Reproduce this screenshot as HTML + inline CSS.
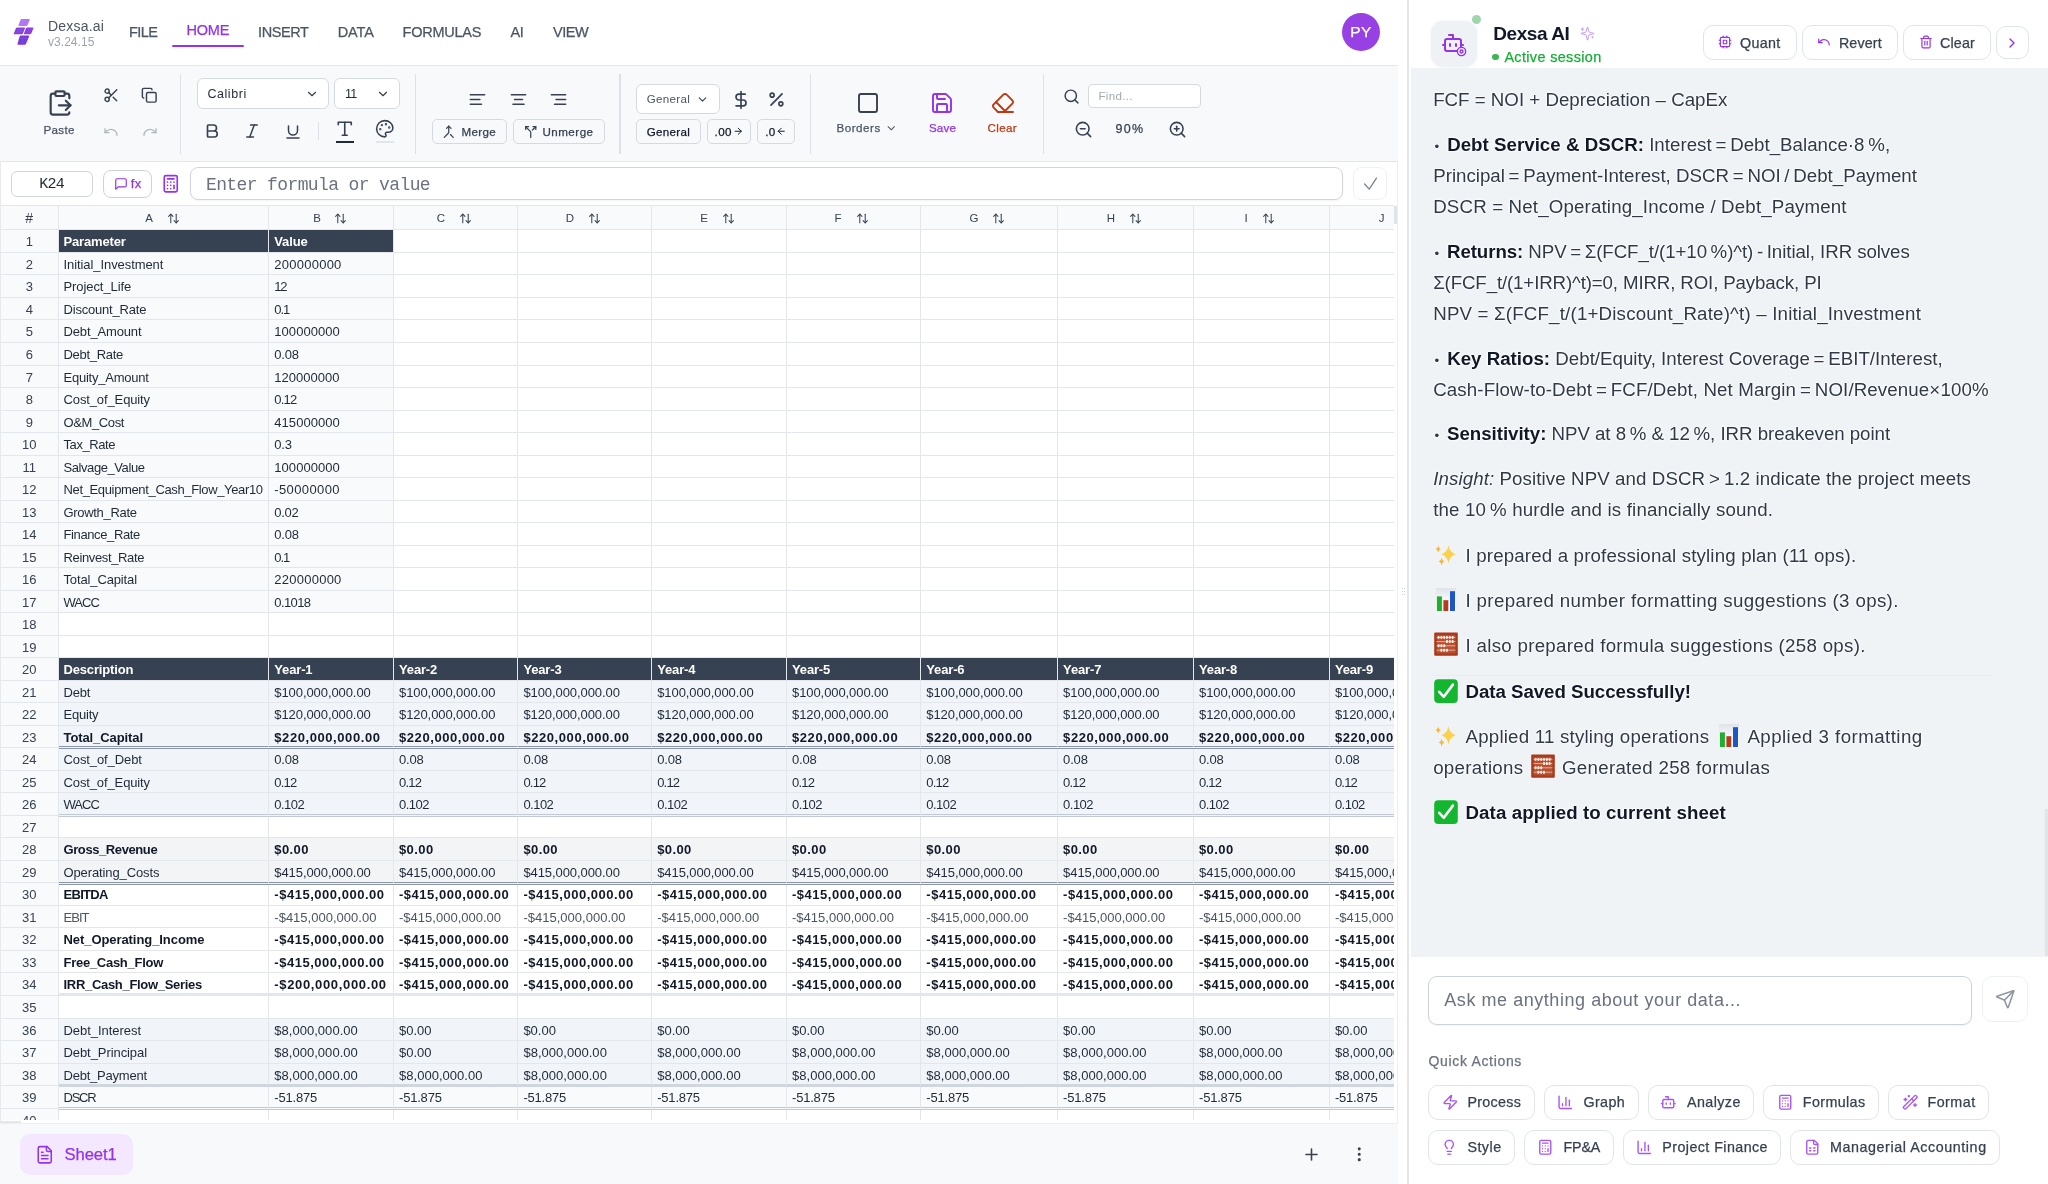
<!DOCTYPE html>
<html><head><meta charset="utf-8"><title>Dexsa.ai</title>
<style>
html,body{margin:0;padding:0;}
body{width:2048px;height:1184px;overflow:hidden;background:#fff;position:relative;font-family:"Liberation Sans",sans-serif;}
.t{position:absolute;white-space:nowrap;display:block;}
.i{position:absolute;display:block;overflow:visible;}
.b{position:absolute;box-sizing:border-box;}
#wrap{position:absolute;left:0;top:0;width:2048px;height:1184px;will-change:transform;}
#left{position:absolute;left:0;top:0;width:1398px;height:1184px;overflow:hidden;}
#right{position:absolute;left:1410px;top:0;width:638px;height:1184px;overflow:hidden;background:#fff;}
#grid{position:absolute;left:0;top:205px;width:1394px;height:914.8px;overflow:hidden;background:#fff;}
.r{position:absolute;left:0;width:1394px;height:22.517px;}
.c{position:absolute;top:0;height:22.517px;box-sizing:border-box;border-right:1px solid #e3e6eb;border-bottom:1px solid #e3e6eb;overflow:hidden;white-space:nowrap;font-size:13px;line-height:24px;padding-left:5px;color:#1f2937;}
.n{left:0;width:58.5px;text-align:center;padding:0;background:#f9fafb;color:#374151;border-left:1px solid #e3e6eb;}
.hd{background:#364152;color:#fff;font-weight:700;}
.bd{font-weight:700;color:#111827;}
</style></head><body><div id="wrap">

<div id="left">
<div class="b" style="left:0.0px;top:65.0px;width:1398.0px;height:1.0px;background:#e5e7eb;"></div>
<svg class="i" style="left:0px;top:0px" width="50" height="60" viewBox="0 0 50 60"><path d="M21.800 19h7.300q1 0 .6.900l-2.100 5.200q-.3.800-1.200.800h-7.300q-1 0-.6-.900l2.100-5.200q.3-.800 1.200-.800z" fill="#b377f3"/><path d="M17.100 27.400h7.300q1 0 .6.900l-2.100 5.200q-.3.800-1.200.800h-7.300q-1 0-.6-.900l2.100-5.200q.3-.800 1.200-.800z" fill="#8b3fe0"/><path d="M27.200 27.400h5.600q1 0 .6.900l-2.100 5.200q-.3.800-1.200.800h-5.600q-1 0-.6-.900l2.100-5.200q.3-.800 1.200-.800z" fill="#8b3fe0"/><path d="M20.900 35.500h7.600q1 0 .6.900l-3.200 7.500q-.3.800-1.200.800h-6.600q-1 0-.6-.900l2.200-7.500q.3-.800 1.200-.800z" fill="#8434dd"/><g fill="#5b8fe0"><circle cx="18.500" cy="30" r=".45"/><circle cx="20.500" cy="30" r=".45"/><circle cx="22.300" cy="30" r=".45"/><circle cx="19.400" cy="31.800" r=".45"/><circle cx="21.200" cy="31.800" r=".45"/><circle cx="28.500" cy="29.600" r=".45"/><circle cx="30.400" cy="29.600" r=".45"/><circle cx="27.700" cy="31.600" r=".45"/><circle cx="29.600" cy="31.600" r=".45"/><circle cx="22.500" cy="38.500" r=".5"/><circle cx="25.300" cy="38.500" r=".5"/><circle cx="22.300" cy="40.500" r=".55" fill="#2f6fd8"/><circle cx="25.200" cy="40.500" r=".55" fill="#2f6fd8"/><circle cx="22.500" cy="42.500" r=".45"/></g></svg>
<span class="t" style="left:48.0px;top:15.6px;line-height:20px;font-size:14px;color:#4b5563;letter-spacing:0.216px;">Dexsa.ai</span>
<span class="t" style="left:48.0px;top:33.9px;line-height:17px;font-size:12px;color:#9ca3af;letter-spacing:0.045px;">v3.24.15</span>
<span class="t" style="left:129.0px;top:21.6px;line-height:20px;font-size:14.5px;color:#4b5563;letter-spacing:-0.531px;-webkit-text-stroke:.25px;">FILE</span>
<span class="t" style="left:186.6px;top:20.4px;line-height:20px;font-size:14.5px;color:#9333ea;letter-spacing:-0.250px;-webkit-text-stroke:.25px;">HOME</span>
<span class="t" style="left:258.0px;top:21.6px;line-height:20px;font-size:14.5px;color:#4b5563;letter-spacing:-0.402px;-webkit-text-stroke:.25px;">INSERT</span>
<span class="t" style="left:337.7px;top:21.6px;line-height:20px;font-size:14.5px;color:#4b5563;letter-spacing:-0.130px;-webkit-text-stroke:.25px;">DATA</span>
<span class="t" style="left:402.6px;top:21.6px;line-height:20px;font-size:14.5px;color:#4b5563;letter-spacing:-0.246px;-webkit-text-stroke:.25px;">FORMULAS</span>
<span class="t" style="left:510.6px;top:21.6px;line-height:20px;font-size:14.5px;color:#4b5563;letter-spacing:-0.550px;-webkit-text-stroke:.25px;">AI</span>
<span class="t" style="left:553.0px;top:21.6px;line-height:20px;font-size:14.5px;color:#4b5563;letter-spacing:-0.439px;-webkit-text-stroke:.25px;">VIEW</span>
<div class="b" style="left:172.3px;top:45.0px;width:71.6px;height:2.2px;background:#9333ea;border-radius:1px;"></div>
<div class="b" style="left:1341.6px;top:12.7px;width:38.0px;height:38.0px;background:#9740e4;border-radius:50%;"></div>
<span class="t" style="left:1350.2px;top:21.0px;line-height:22px;font-size:15.5px;color:#fff;letter-spacing:0.411px;-webkit-text-stroke:.25px;">PY</span>
<div class="b" style="left:0.0px;top:66.0px;width:1398.0px;height:96.0px;background:#f8f9fb;border-bottom:1px solid #e3e6eb;"></div>
<svg class="i" style="left:45.8px;top:88.8px;color:#374151;" width="28" height="28" viewBox="0 0 24 24" fill="none" stroke="currentColor" stroke-width="1.85" stroke-linecap="round" stroke-linejoin="round"><path d="M15 2H9a1 1 0 0 0-1 1v2c0 .6.4 1 1 1h6c.6 0 1-.4 1-1V3c0-.6-.4-1-1-1Z"/><path d="M8 4H6a2 2 0 0 0-2 2v14a2 2 0 0 0 2 2h12a2 2 0 0 0 2-2M16 4h2a2 2 0 0 1 2 2v2M11 14h10"/><path d="m17 10 4 4-4 4"/></svg>
<span class="t" style="left:43.4px;top:121.9px;line-height:16px;font-size:11.6px;color:#4b5563;letter-spacing:0.347px;-webkit-text-stroke:.25px;">Paste</span>
<svg class="i" style="left:102.8px;top:86.8px;color:#374151;" width="16.5" height="16.5" viewBox="0 0 24 24" fill="none" stroke="currentColor" stroke-width="2.1" stroke-linecap="round" stroke-linejoin="round"><circle cx="6" cy="6" r="3"/><path d="M8.12 8.12 12 12"/><path d="M20 4 8.12 15.88"/><circle cx="6" cy="18" r="3"/><path d="M14.8 14.8 20 20"/></svg>
<svg class="i" style="left:141.2px;top:86.8px;color:#374151;" width="16.5" height="16.5" viewBox="0 0 24 24" fill="none" stroke="currentColor" stroke-width="2.1" stroke-linecap="round" stroke-linejoin="round"><rect width="14" height="14" x="8" y="8" rx="2" ry="2"/><path d="M4 16c-1.1 0-2-.9-2-2V4c0-1.1.9-2 2-2h10c1.1 0 2 .9 2 2"/></svg>
<svg class="i" style="left:103.0px;top:124.0px;color:#b3b8c1;" width="16" height="16" viewBox="0 0 24 24" fill="none" stroke="currentColor" stroke-width="2" stroke-linecap="round" stroke-linejoin="round"><path d="M3 7v6h6"/><path d="M21 17a9 9 0 0 0-9-9 9 9 0 0 0-6 2.3L3 13"/></svg>
<svg class="i" style="left:141.5px;top:124.0px;color:#b3b8c1;" width="16" height="16" viewBox="0 0 24 24" fill="none" stroke="currentColor" stroke-width="2" stroke-linecap="round" stroke-linejoin="round"><path d="M21 7v6h-6"/><path d="M3 17a9 9 0 0 1 9-9 9 9 0 0 1 6 2.3l3 2.7"/></svg>
<div class="b" style="left:180.0px;top:73.5px;width:1.2px;height:80.5px;background:#dde0e6;"></div>
<div class="b" style="left:197.2px;top:78.2px;width:131.6px;height:30.6px;background:#fff;border:1px solid #d5d9e0;border-radius:6px;"></div>
<span class="t" style="left:207.5px;top:84.6px;line-height:18px;font-size:12.5px;color:#1f2937;letter-spacing:0.539px;">Calibri</span>
<svg class="i" style="left:304.5px;top:86.5px;color:#374151;" width="14" height="14" viewBox="0 0 24 24" fill="none" stroke="currentColor" stroke-width="2" stroke-linecap="round" stroke-linejoin="round"><path d="m6 9 6 6 6-6"/></svg>
<div class="b" style="left:334.2px;top:78.2px;width:65.8px;height:30.6px;background:#fff;border:1px solid #d5d9e0;border-radius:6px;"></div>
<span class="t" style="left:345.0px;top:84.6px;line-height:18px;font-size:12.5px;color:#1f2937;letter-spacing:-0.738px;">11</span>
<svg class="i" style="left:375.5px;top:86.5px;color:#374151;" width="14" height="14" viewBox="0 0 24 24" fill="none" stroke="currentColor" stroke-width="2" stroke-linecap="round" stroke-linejoin="round"><path d="m6 9 6 6 6-6"/></svg>
<svg class="i" style="left:203.0px;top:122.4px;color:#374151;" width="18" height="18" viewBox="0 0 24 24" fill="none" stroke="currentColor" stroke-width="2.2" stroke-linecap="round" stroke-linejoin="round"><path d="M6 12h9a4 4 0 0 1 0 8H7a1 1 0 0 1-1-1V5a1 1 0 0 1 1-1h7a4 4 0 0 1 0 8"/></svg>
<svg class="i" style="left:243.4px;top:122.4px;color:#374151;" width="18" height="18" viewBox="0 0 24 24" fill="none" stroke="currentColor" stroke-width="2" stroke-linecap="round" stroke-linejoin="round"><line x1="19" x2="10" y1="4" y2="4"/><line x1="14" x2="5" y1="20" y2="20"/><line x1="15" x2="9" y1="4" y2="20"/></svg>
<svg class="i" style="left:283.7px;top:122.6px;color:#374151;" width="18" height="18" viewBox="0 0 24 24" fill="none" stroke="currentColor" stroke-width="2" stroke-linecap="round" stroke-linejoin="round"><path d="M6 4v6a6 6 0 0 0 12 0V4"/><line x1="4" x2="20" y1="20" y2="20"/></svg>
<div class="b" style="left:318.0px;top:122.0px;width:1.2px;height:18.0px;background:#dde0e6;"></div>
<svg class="i" style="left:335.1px;top:119.4px;color:#374151;" width="19.5" height="19.5" viewBox="0 0 24 24" fill="none" stroke="currentColor" stroke-width="2" stroke-linecap="round" stroke-linejoin="round"><polyline points="4 7 4 4 20 4 20 7"/><line x1="9" x2="15" y1="20" y2="20"/><line x1="12" x2="12" y1="4" y2="20"/></svg>
<div class="b" style="left:335.6px;top:140.6px;width:18.6px;height:2.2px;background:#1f2937;"></div>
<svg class="i" style="left:375.2px;top:119.2px;color:#374151;" width="19.5" height="19.5" viewBox="0 0 24 24" fill="none" stroke="currentColor" stroke-width="1.9" stroke-linecap="round" stroke-linejoin="round"><circle cx="13.5" cy="6.5" r=".5" fill="currentColor"/><circle cx="17.5" cy="10.5" r=".5" fill="currentColor"/><circle cx="8.5" cy="7.5" r=".5" fill="currentColor"/><circle cx="6.5" cy="12.5" r=".5" fill="currentColor"/><path d="M12 2C6.5 2 2 6.5 2 12s4.5 10 10 10c.926 0 1.648-.746 1.648-1.688 0-.437-.18-.835-.437-1.125-.29-.289-.438-.652-.438-1.125a1.64 1.64 0 0 1 1.668-1.668h1.996c3.051 0 5.555-2.503 5.555-5.554C21.965 6.012 17.461 2 12 2z"/></svg>
<div class="b" style="left:375.8px;top:140.8px;width:18.6px;height:2.2px;background:#e2e5ea;"></div>
<div class="b" style="left:415.0px;top:73.5px;width:1.2px;height:80.5px;background:#dde0e6;"></div>
<svg class="i" style="left:467.5px;top:89.9px;color:#374151;" width="19" height="19" viewBox="0 0 24 24" fill="none" stroke="currentColor" stroke-width="2" stroke-linecap="round" stroke-linejoin="round"><line x1="21" x2="3" y1="6" y2="6"/><line x1="15" x2="3" y1="12" y2="12"/><line x1="17" x2="3" y1="18" y2="18"/></svg>
<svg class="i" style="left:508.5px;top:89.9px;color:#374151;" width="19" height="19" viewBox="0 0 24 24" fill="none" stroke="currentColor" stroke-width="2" stroke-linecap="round" stroke-linejoin="round"><line x1="21" x2="3" y1="6" y2="6"/><line x1="17" x2="7" y1="12" y2="12"/><line x1="19" x2="5" y1="18" y2="18"/></svg>
<svg class="i" style="left:549.3px;top:89.9px;color:#374151;" width="19" height="19" viewBox="0 0 24 24" fill="none" stroke="currentColor" stroke-width="2" stroke-linecap="round" stroke-linejoin="round"><line x1="21" x2="3" y1="6" y2="6"/><line x1="21" x2="9" y1="12" y2="12"/><line x1="21" x2="7" y1="18" y2="18"/></svg>
<div class="b" style="left:431.6px;top:119.3px;width:75.6px;height:24.4px;border:1px solid #d5d9e0;border-radius:5px;background:#f8f9fb;"></div>
<svg class="i" style="left:442.1px;top:124.7px;color:#374151;" width="13.5" height="13.5" viewBox="0 0 24 24" fill="none" stroke="currentColor" stroke-width="2.2" stroke-linecap="round" stroke-linejoin="round"><path d="m8 6 4-4 4 4"/><path d="M12 2v10.3a4 4 0 0 1-1.172 2.872L4 22"/><path d="m20 22-5-5"/></svg>
<span class="t" style="left:461.4px;top:123.6px;line-height:16px;font-size:11.6px;color:#374151;letter-spacing:0.384px;-webkit-text-stroke:.25px;">Merge</span>
<div class="b" style="left:513.0px;top:119.3px;width:91.6px;height:24.4px;border:1px solid #d5d9e0;border-radius:5px;background:#f8f9fb;"></div>
<svg class="i" style="left:524.0px;top:124.7px;color:#374151;" width="13.5" height="13.5" viewBox="0 0 24 24" fill="none" stroke="currentColor" stroke-width="2.2" stroke-linecap="round" stroke-linejoin="round"><path d="M16 3h5v5"/><path d="M8 3H3v5"/><path d="M12 22v-8.3a4 4 0 0 0-1.172-2.872L3 3"/><path d="m15 9 6-6"/></svg>
<span class="t" style="left:542.4px;top:123.6px;line-height:16px;font-size:11.6px;color:#374151;letter-spacing:0.499px;-webkit-text-stroke:.25px;">Unmerge</span>
<div class="b" style="left:619.4px;top:73.5px;width:1.2px;height:80.5px;background:#dde0e6;"></div>
<div class="b" style="left:636.4px;top:84.3px;width:83.5px;height:29.6px;background:#fff;border:1px solid #d5d9e0;border-radius:6px;"></div>
<span class="t" style="left:646.7px;top:91.0px;line-height:16px;font-size:11.6px;color:#4b5563;letter-spacing:0.319px;">General</span>
<svg class="i" style="left:696.3px;top:92.5px;color:#374151;" width="13" height="13" viewBox="0 0 24 24" fill="none" stroke="currentColor" stroke-width="2" stroke-linecap="round" stroke-linejoin="round"><path d="m6 9 6 6 6-6"/></svg>
<svg class="i" style="left:730.8px;top:89.8px;color:#374151;" width="20" height="20" viewBox="0 0 24 24" fill="none" stroke="currentColor" stroke-width="2" stroke-linecap="round" stroke-linejoin="round"><line x1="12" x2="12" y1="2" y2="22"/><path d="M17 5H9.5a3.5 3.5 0 0 0 0 7h5a3.5 3.5 0 0 1 0 7H6"/></svg>
<svg class="i" style="left:766.7px;top:90.3px;color:#374151;" width="19" height="19" viewBox="0 0 24 24" fill="none" stroke="currentColor" stroke-width="2.1" stroke-linecap="round" stroke-linejoin="round"><line x1="19" x2="5" y1="5" y2="19"/><circle cx="6.5" cy="6.5" r="2.5"/><circle cx="17.5" cy="17.5" r="2.5"/></svg>
<div class="b" style="left:636.4px;top:119.3px;width:64.5px;height:24.4px;border:1px solid #d5d9e0;border-radius:5px;background:#f8f9fb;"></div>
<span class="t" style="left:646.7px;top:123.6px;line-height:16px;font-size:11.6px;color:#111827;letter-spacing:0.319px;-webkit-text-stroke:.25px;">General</span>
<div class="b" style="left:706.8px;top:119.3px;width:44.4px;height:24.4px;border:1px solid #d5d9e0;border-radius:5px;background:#f8f9fb;"></div>
<span class="t" style="left:714.6px;top:123.6px;line-height:16px;font-size:11.6px;color:#111827;letter-spacing:0.425px;-webkit-text-stroke:.25px;">.00</span>
<svg class="i" style="left:733.1px;top:126.3px;color:#111827;" width="10.5" height="10.5" viewBox="0 0 24 24" fill="none" stroke="currentColor" stroke-width="2.2" stroke-linecap="round" stroke-linejoin="round"><path d="M5 12h14"/><path d="m12 5 7 7-7 7"/></svg>
<div class="b" style="left:757.4px;top:119.3px;width:37.4px;height:24.4px;border:1px solid #d5d9e0;border-radius:5px;background:#f8f9fb;"></div>
<span class="t" style="left:765.2px;top:123.6px;line-height:16px;font-size:11.6px;color:#111827;letter-spacing:0.363px;-webkit-text-stroke:.25px;">.0</span>
<svg class="i" style="left:776.1px;top:126.3px;color:#111827;" width="10.5" height="10.5" viewBox="0 0 24 24" fill="none" stroke="currentColor" stroke-width="2.2" stroke-linecap="round" stroke-linejoin="round"><path d="M19 12H5"/><path d="m12 19-7-7 7-7"/></svg>
<div class="b" style="left:809.8px;top:73.5px;width:1.2px;height:80.5px;background:#dde0e6;"></div>
<svg class="i" style="left:855.8px;top:91.2px;color:#374151;" width="24" height="24" viewBox="0 0 24 24" fill="none" stroke="currentColor" stroke-width="1.9" stroke-linecap="round" stroke-linejoin="round"><rect width="18" height="18" x="3" y="3" rx="2"/></svg>
<span class="t" style="left:836.5px;top:119.8px;line-height:16px;font-size:11.6px;color:#4b5563;letter-spacing:0.526px;-webkit-text-stroke:.25px;">Borders</span>
<svg class="i" style="left:885.2px;top:121.8px;color:#4b5563;" width="12.5" height="12.5" viewBox="0 0 24 24" fill="none" stroke="currentColor" stroke-width="2" stroke-linecap="round" stroke-linejoin="round"><path d="m6 9 6 6 6-6"/></svg>
<svg class="i" style="left:930.0px;top:91.2px;color:#9333ea;" width="24" height="24" viewBox="0 0 24 24" fill="none" stroke="currentColor" stroke-width="1.9" stroke-linecap="round" stroke-linejoin="round"><path d="M15.2 3a2 2 0 0 1 1.4.6l3.8 3.8a2 2 0 0 1 .6 1.4V19a2 2 0 0 1-2 2H5a2 2 0 0 1-2-2V5a2 2 0 0 1 2-2z"/><path d="M17 21v-7a1 1 0 0 0-1-1H8a1 1 0 0 0-1 1v7"/><path d="M7 3v4a1 1 0 0 0 1 1h7"/></svg>
<span class="t" style="left:929.0px;top:119.8px;line-height:16px;font-size:11.6px;color:#9333ea;letter-spacing:0.140px;-webkit-text-stroke:.25px;">Save</span>
<svg class="i" style="left:990.6px;top:91.2px;color:#bb3a14;" width="24" height="24" viewBox="0 0 24 24" fill="none" stroke="currentColor" stroke-width="1.9" stroke-linecap="round" stroke-linejoin="round"><path d="m7 21-4.3-4.3c-1-1-1-2.5 0-3.4l9.6-9.6c1-1 2.5-1 3.4 0l5.6 5.6c1 1 1 2.5 0 3.4L13 21"/><path d="M22 21H7"/><path d="m5 11 9 9"/></svg>
<span class="t" style="left:987.6px;top:119.8px;line-height:16px;font-size:11.6px;color:#bb3a14;letter-spacing:0.336px;-webkit-text-stroke:.25px;">Clear</span>
<div class="b" style="left:1042.6px;top:73.5px;width:1.2px;height:80.5px;background:#dde0e6;"></div>
<svg class="i" style="left:1063.2px;top:87.8px;color:#374151;" width="17" height="17" viewBox="0 0 24 24" fill="none" stroke="currentColor" stroke-width="2.1" stroke-linecap="round" stroke-linejoin="round"><circle cx="11" cy="11" r="8"/><path d="m21 21-4.3-4.3"/></svg>
<div class="b" style="left:1087.7px;top:83.6px;width:113.2px;height:24.8px;background:#fff;border:1px solid #d5d9e0;border-radius:4px;"></div>
<span class="t" style="left:1098.4px;top:88.3px;line-height:16px;font-size:11.6px;color:#a3a9b3;letter-spacing:0.309px;">Find...</span>
<svg class="i" style="left:1074.1px;top:119.8px;color:#374151;" width="19" height="19" viewBox="0 0 24 24" fill="none" stroke="currentColor" stroke-width="2" stroke-linecap="round" stroke-linejoin="round"><circle cx="11" cy="11" r="8"/><line x1="21" x2="16.65" y1="21" y2="16.65"/><line x1="8" x2="14" y1="11" y2="11"/></svg>
<span class="t" style="left:1115.4px;top:120.3px;line-height:18px;font-size:12.5px;color:#374151;letter-spacing:1.294px;-webkit-text-stroke:.25px;">90%</span>
<svg class="i" style="left:1167.5px;top:119.8px;color:#374151;" width="19" height="19" viewBox="0 0 24 24" fill="none" stroke="currentColor" stroke-width="2" stroke-linecap="round" stroke-linejoin="round"><circle cx="11" cy="11" r="8"/><line x1="21" x2="16.65" y1="21" y2="16.65"/><line x1="8" x2="14" y1="11" y2="11"/><line x1="11" x2="11" y1="8" y2="14"/></svg>
<div class="b" style="left:11.0px;top:171.0px;width:82.4px;height:25.6px;background:#fff;border:1.500px solid #d0d6de;border-radius:6px;"></div>
<span class="t" style="left:39.3px;top:173.9px;line-height:21px;font-size:15px;color:#1f2937;font-family:'Liberation Mono',monospace;letter-spacing:-0.735px;">K24</span>
<div class="b" style="left:103.3px;top:169.6px;width:48.4px;height:28.2px;background:#fff;border:1.500px solid #ccd2db;border-radius:8px;"></div>
<svg class="i" style="left:113.9px;top:176.6px;color:#9333ea;" width="14" height="14" viewBox="0 0 24 24" fill="none" stroke="currentColor" stroke-width="2" stroke-linecap="round" stroke-linejoin="round"><path d="M21 15a2 2 0 0 1-2 2H7l-4 4V5a2 2 0 0 1 2-2h14a2 2 0 0 1 2 2z"/></svg>
<span class="t" style="left:130.8px;top:174.6px;line-height:18px;font-size:13px;color:#9333ea;letter-spacing:0.244px;-webkit-text-stroke:.25px;">fx</span>
<svg class="i" style="left:160.9px;top:173.8px;color:#9333ea;" width="19.5" height="19.5" viewBox="0 0 24 24" fill="none" stroke="currentColor" stroke-width="2" stroke-linecap="round" stroke-linejoin="round"><rect width="16" height="20" x="4" y="2" rx="2"/><line x1="8" x2="16" y1="6" y2="6"/><line x1="16" x2="16" y1="14" y2="18"/><path d="M16 10h.01"/><path d="M12 10h.01"/><path d="M8 10h.01"/><path d="M12 14h.01"/><path d="M8 14h.01"/><path d="M12 18h.01"/><path d="M8 18h.01"/></svg>
<div class="b" style="left:190.4px;top:167.2px;width:1152.3px;height:32.5px;background:#fff;border:1.500px solid #d0d6de;border-radius:8px;box-shadow:0 1px 2px rgba(0,0,0,.05);"></div>
<span class="t" style="left:206.0px;top:172.9px;line-height:25px;font-size:18px;color:#6b7280;font-family:'Liberation Mono',monospace;letter-spacing:-0.620px;">Enter formula or value</span>
<div class="b" style="left:1352.5px;top:167.2px;width:34.8px;height:32.5px;background:#fff;border:1px solid #eff1f4;border-radius:8px;"></div>
<svg class="i" style="left:1361.5px;top:175.4px;color:#7d8695;" width="17" height="17" viewBox="0 0 24 24" fill="none" stroke="currentColor" stroke-width="1.9" stroke-linecap="round" stroke-linejoin="round"><path d="M3.600 12.800 10.200 20 20.400 4.300"/></svg>
<div id="grid">
<div class="r" style="top:0;height:25.0px;background:#f9fafb;">
<div class="c n" style="height:25.0px;line-height:25.0px;font-size:14px;border-top:1px solid #e3e6eb;">#</div>
<div class="c" style="left:58.5px;width:210.8px;height:25.0px;background:#f9fafb;border-top:1px solid #e3e6eb;"></div>
<div class="c" style="left:269.3px;width:124.7px;height:25.0px;background:#f9fafb;border-top:1px solid #e3e6eb;"></div>
<div class="c" style="left:394.0px;width:124.4px;height:25.0px;background:#f9fafb;border-top:1px solid #e3e6eb;"></div>
<div class="c" style="left:518.4px;width:133.8px;height:25.0px;background:#f9fafb;border-top:1px solid #e3e6eb;"></div>
<div class="c" style="left:652.2px;width:134.8px;height:25.0px;background:#f9fafb;border-top:1px solid #e3e6eb;"></div>
<div class="c" style="left:787.0px;width:134.3px;height:25.0px;background:#f9fafb;border-top:1px solid #e3e6eb;"></div>
<div class="c" style="left:921.3px;width:136.8px;height:25.0px;background:#f9fafb;border-top:1px solid #e3e6eb;"></div>
<div class="c" style="left:1058.1px;width:135.9px;height:25.0px;background:#f9fafb;border-top:1px solid #e3e6eb;"></div>
<div class="c" style="left:1194.0px;width:135.9px;height:25.0px;background:#f9fafb;border-top:1px solid #e3e6eb;"></div>
<div class="c" style="left:1329.9px;width:140.1px;height:25.0px;background:#f9fafb;border-top:1px solid #e3e6eb;"></div>
</div>
<span class="t" style="left:145.2px;top:5.0px;line-height:16px;font-size:11.5px;color:#374151;">A</span>
<svg class="i" style="left:166.5px;top:6.5px;color:#374151;" width="13" height="13" viewBox="0 0 24 24" fill="none" stroke="currentColor" stroke-width="1.9" stroke-linecap="round" stroke-linejoin="round"><path d="m21 16-4 4-4-4"/><path d="M17 20V4"/><path d="m3 8 4-4 4 4"/><path d="M7 4v16"/></svg>
<span class="t" style="left:313.2px;top:5.0px;line-height:16px;font-size:11.5px;color:#374151;">B</span>
<svg class="i" style="left:333.5px;top:6.5px;color:#374151;" width="13" height="13" viewBox="0 0 24 24" fill="none" stroke="currentColor" stroke-width="1.9" stroke-linecap="round" stroke-linejoin="round"><path d="m21 16-4 4-4-4"/><path d="M17 20V4"/><path d="m3 8 4-4 4 4"/><path d="M7 4v16"/></svg>
<span class="t" style="left:436.8px;top:5.0px;line-height:16px;font-size:11.5px;color:#374151;">C</span>
<svg class="i" style="left:458.5px;top:6.5px;color:#374151;" width="13" height="13" viewBox="0 0 24 24" fill="none" stroke="currentColor" stroke-width="1.9" stroke-linecap="round" stroke-linejoin="round"><path d="m21 16-4 4-4-4"/><path d="M17 20V4"/><path d="m3 8 4-4 4 4"/><path d="M7 4v16"/></svg>
<span class="t" style="left:565.8px;top:5.0px;line-height:16px;font-size:11.5px;color:#374151;">D</span>
<svg class="i" style="left:587.5px;top:6.5px;color:#374151;" width="13" height="13" viewBox="0 0 24 24" fill="none" stroke="currentColor" stroke-width="1.9" stroke-linecap="round" stroke-linejoin="round"><path d="m21 16-4 4-4-4"/><path d="M17 20V4"/><path d="m3 8 4-4 4 4"/><path d="M7 4v16"/></svg>
<span class="t" style="left:700.2px;top:5.0px;line-height:16px;font-size:11.5px;color:#374151;">E</span>
<svg class="i" style="left:721.5px;top:6.5px;color:#374151;" width="13" height="13" viewBox="0 0 24 24" fill="none" stroke="currentColor" stroke-width="1.9" stroke-linecap="round" stroke-linejoin="round"><path d="m21 16-4 4-4-4"/><path d="M17 20V4"/><path d="m3 8 4-4 4 4"/><path d="M7 4v16"/></svg>
<span class="t" style="left:834.5px;top:5.0px;line-height:16px;font-size:11.5px;color:#374151;">F</span>
<svg class="i" style="left:855.5px;top:6.5px;color:#374151;" width="13" height="13" viewBox="0 0 24 24" fill="none" stroke="currentColor" stroke-width="1.9" stroke-linecap="round" stroke-linejoin="round"><path d="m21 16-4 4-4-4"/><path d="M17 20V4"/><path d="m3 8 4-4 4 4"/><path d="M7 4v16"/></svg>
<span class="t" style="left:969.5px;top:5.0px;line-height:16px;font-size:11.5px;color:#374151;">G</span>
<svg class="i" style="left:991.5px;top:6.5px;color:#374151;" width="13" height="13" viewBox="0 0 24 24" fill="none" stroke="currentColor" stroke-width="1.9" stroke-linecap="round" stroke-linejoin="round"><path d="m21 16-4 4-4-4"/><path d="M17 20V4"/><path d="m3 8 4-4 4 4"/><path d="M7 4v16"/></svg>
<span class="t" style="left:1106.8px;top:5.0px;line-height:16px;font-size:11.5px;color:#374151;">H</span>
<svg class="i" style="left:1128.5px;top:6.5px;color:#374151;" width="13" height="13" viewBox="0 0 24 24" fill="none" stroke="currentColor" stroke-width="1.9" stroke-linecap="round" stroke-linejoin="round"><path d="m21 16-4 4-4-4"/><path d="M17 20V4"/><path d="m3 8 4-4 4 4"/><path d="M7 4v16"/></svg>
<span class="t" style="left:1244.4px;top:5.0px;line-height:16px;font-size:11.5px;color:#374151;">I</span>
<svg class="i" style="left:1261.5px;top:6.5px;color:#374151;" width="13" height="13" viewBox="0 0 24 24" fill="none" stroke="currentColor" stroke-width="1.9" stroke-linecap="round" stroke-linejoin="round"><path d="m21 16-4 4-4-4"/><path d="M17 20V4"/><path d="m3 8 4-4 4 4"/><path d="M7 4v16"/></svg>
<span class="t" style="left:1378.8px;top:5.0px;line-height:16px;font-size:11.5px;color:#374151;">J</span>
<svg class="i" style="left:1399.5px;top:6.5px;color:#374151;" width="13" height="13" viewBox="0 0 24 24" fill="none" stroke="currentColor" stroke-width="1.9" stroke-linecap="round" stroke-linejoin="round"><path d="m21 16-4 4-4-4"/><path d="M17 20V4"/><path d="m3 8 4-4 4 4"/><path d="M7 4v16"/></svg>
<div class="r" style="top:25.4px;">
<div class="c n">1</div>
<div class="c hd" style="left:58.5px;width:210.8px;letter-spacing:-0.155px;">Parameter</div>
<div class="c hd" style="left:269.3px;width:124.7px;letter-spacing:-0.150px;">Value</div>
<div class="c" style="left:394.0px;width:124.4px;"></div>
<div class="c" style="left:518.4px;width:133.8px;"></div>
<div class="c" style="left:652.2px;width:134.8px;"></div>
<div class="c" style="left:787.0px;width:134.3px;"></div>
<div class="c" style="left:921.3px;width:136.8px;"></div>
<div class="c" style="left:1058.1px;width:135.9px;"></div>
<div class="c" style="left:1194.0px;width:135.9px;"></div>
<div class="c" style="left:1329.9px;width:140.1px;"></div>
</div>
<div class="r" style="top:47.9px;">
<div class="c n">2</div>
<div class="c" style="left:58.5px;width:210.8px;background:#f9fafb;letter-spacing:-0.076px;">Initial_Investment</div>
<div class="c" style="left:269.3px;width:124.7px;background:#f9fafb;letter-spacing:0.248px;">200000000</div>
<div class="c" style="left:394.0px;width:124.4px;"></div>
<div class="c" style="left:518.4px;width:133.8px;"></div>
<div class="c" style="left:652.2px;width:134.8px;"></div>
<div class="c" style="left:787.0px;width:134.3px;"></div>
<div class="c" style="left:921.3px;width:136.8px;"></div>
<div class="c" style="left:1058.1px;width:135.9px;"></div>
<div class="c" style="left:1194.0px;width:135.9px;"></div>
<div class="c" style="left:1329.9px;width:140.1px;"></div>
</div>
<div class="r" style="top:70.4px;">
<div class="c n">3</div>
<div class="c" style="left:58.5px;width:210.8px;background:#f9fafb;letter-spacing:-0.079px;">Project_Life</div>
<div class="c" style="left:269.3px;width:124.7px;background:#f9fafb;letter-spacing:-1.230px;">12</div>
<div class="c" style="left:394.0px;width:124.4px;"></div>
<div class="c" style="left:518.4px;width:133.8px;"></div>
<div class="c" style="left:652.2px;width:134.8px;"></div>
<div class="c" style="left:787.0px;width:134.3px;"></div>
<div class="c" style="left:921.3px;width:136.8px;"></div>
<div class="c" style="left:1058.1px;width:135.9px;"></div>
<div class="c" style="left:1194.0px;width:135.9px;"></div>
<div class="c" style="left:1329.9px;width:140.1px;"></div>
</div>
<div class="r" style="top:92.9px;">
<div class="c n">4</div>
<div class="c" style="left:58.5px;width:210.8px;background:#f9fafb;letter-spacing:-0.198px;">Discount_Rate</div>
<div class="c" style="left:269.3px;width:124.7px;background:#f9fafb;letter-spacing:-1.024px;">0.1</div>
<div class="c" style="left:394.0px;width:124.4px;"></div>
<div class="c" style="left:518.4px;width:133.8px;"></div>
<div class="c" style="left:652.2px;width:134.8px;"></div>
<div class="c" style="left:787.0px;width:134.3px;"></div>
<div class="c" style="left:921.3px;width:136.8px;"></div>
<div class="c" style="left:1058.1px;width:135.9px;"></div>
<div class="c" style="left:1194.0px;width:135.9px;"></div>
<div class="c" style="left:1329.9px;width:140.1px;"></div>
</div>
<div class="r" style="top:115.4px;">
<div class="c n">5</div>
<div class="c" style="left:58.5px;width:210.8px;background:#f9fafb;letter-spacing:-0.145px;">Debt_Amount</div>
<div class="c" style="left:269.3px;width:124.7px;background:#f9fafb;letter-spacing:0.059px;">100000000</div>
<div class="c" style="left:394.0px;width:124.4px;"></div>
<div class="c" style="left:518.4px;width:133.8px;"></div>
<div class="c" style="left:652.2px;width:134.8px;"></div>
<div class="c" style="left:787.0px;width:134.3px;"></div>
<div class="c" style="left:921.3px;width:136.8px;"></div>
<div class="c" style="left:1058.1px;width:135.9px;"></div>
<div class="c" style="left:1194.0px;width:135.9px;"></div>
<div class="c" style="left:1329.9px;width:140.1px;"></div>
</div>
<div class="r" style="top:138.0px;">
<div class="c n">6</div>
<div class="c" style="left:58.5px;width:210.8px;background:#f9fafb;letter-spacing:-0.295px;">Debt_Rate</div>
<div class="c" style="left:269.3px;width:124.7px;background:#f9fafb;letter-spacing:-0.176px;">0.08</div>
<div class="c" style="left:394.0px;width:124.4px;"></div>
<div class="c" style="left:518.4px;width:133.8px;"></div>
<div class="c" style="left:652.2px;width:134.8px;"></div>
<div class="c" style="left:787.0px;width:134.3px;"></div>
<div class="c" style="left:921.3px;width:136.8px;"></div>
<div class="c" style="left:1058.1px;width:135.9px;"></div>
<div class="c" style="left:1194.0px;width:135.9px;"></div>
<div class="c" style="left:1329.9px;width:140.1px;"></div>
</div>
<div class="r" style="top:160.5px;">
<div class="c n">7</div>
<div class="c" style="left:58.5px;width:210.8px;background:#f9fafb;letter-spacing:-0.236px;">Equity_Amount</div>
<div class="c" style="left:269.3px;width:124.7px;background:#f9fafb;letter-spacing:0.025px;">120000000</div>
<div class="c" style="left:394.0px;width:124.4px;"></div>
<div class="c" style="left:518.4px;width:133.8px;"></div>
<div class="c" style="left:652.2px;width:134.8px;"></div>
<div class="c" style="left:787.0px;width:134.3px;"></div>
<div class="c" style="left:921.3px;width:136.8px;"></div>
<div class="c" style="left:1058.1px;width:135.9px;"></div>
<div class="c" style="left:1194.0px;width:135.9px;"></div>
<div class="c" style="left:1329.9px;width:140.1px;"></div>
</div>
<div class="r" style="top:183.0px;">
<div class="c n">8</div>
<div class="c" style="left:58.5px;width:210.8px;background:#f9fafb;letter-spacing:-0.119px;">Cost_of_Equity</div>
<div class="c" style="left:269.3px;width:124.7px;background:#f9fafb;letter-spacing:-0.801px;">0.12</div>
<div class="c" style="left:394.0px;width:124.4px;"></div>
<div class="c" style="left:518.4px;width:133.8px;"></div>
<div class="c" style="left:652.2px;width:134.8px;"></div>
<div class="c" style="left:787.0px;width:134.3px;"></div>
<div class="c" style="left:921.3px;width:136.8px;"></div>
<div class="c" style="left:1058.1px;width:135.9px;"></div>
<div class="c" style="left:1194.0px;width:135.9px;"></div>
<div class="c" style="left:1329.9px;width:140.1px;"></div>
</div>
<div class="r" style="top:205.5px;">
<div class="c n">9</div>
<div class="c" style="left:58.5px;width:210.8px;background:#f9fafb;letter-spacing:-0.384px;">O&amp;M_Cost</div>
<div class="c" style="left:269.3px;width:124.7px;background:#f9fafb;letter-spacing:0.059px;">415000000</div>
<div class="c" style="left:394.0px;width:124.4px;"></div>
<div class="c" style="left:518.4px;width:133.8px;"></div>
<div class="c" style="left:652.2px;width:134.8px;"></div>
<div class="c" style="left:787.0px;width:134.3px;"></div>
<div class="c" style="left:921.3px;width:136.8px;"></div>
<div class="c" style="left:1058.1px;width:135.9px;"></div>
<div class="c" style="left:1194.0px;width:135.9px;"></div>
<div class="c" style="left:1329.9px;width:140.1px;"></div>
</div>
<div class="r" style="top:228.0px;">
<div class="c n">10</div>
<div class="c" style="left:58.5px;width:210.8px;background:#f9fafb;letter-spacing:-0.415px;">Tax_Rate</div>
<div class="c" style="left:269.3px;width:124.7px;background:#f9fafb;letter-spacing:-0.224px;">0.3</div>
<div class="c" style="left:394.0px;width:124.4px;"></div>
<div class="c" style="left:518.4px;width:133.8px;"></div>
<div class="c" style="left:652.2px;width:134.8px;"></div>
<div class="c" style="left:787.0px;width:134.3px;"></div>
<div class="c" style="left:921.3px;width:136.8px;"></div>
<div class="c" style="left:1058.1px;width:135.9px;"></div>
<div class="c" style="left:1194.0px;width:135.9px;"></div>
<div class="c" style="left:1329.9px;width:140.1px;"></div>
</div>
<div class="r" style="top:250.5px;">
<div class="c n">11</div>
<div class="c" style="left:58.5px;width:210.8px;background:#f9fafb;letter-spacing:-0.423px;">Salvage_Value</div>
<div class="c" style="left:269.3px;width:124.7px;background:#f9fafb;letter-spacing:0.059px;">100000000</div>
<div class="c" style="left:394.0px;width:124.4px;"></div>
<div class="c" style="left:518.4px;width:133.8px;"></div>
<div class="c" style="left:652.2px;width:134.8px;"></div>
<div class="c" style="left:787.0px;width:134.3px;"></div>
<div class="c" style="left:921.3px;width:136.8px;"></div>
<div class="c" style="left:1058.1px;width:135.9px;"></div>
<div class="c" style="left:1194.0px;width:135.9px;"></div>
<div class="c" style="left:1329.9px;width:140.1px;"></div>
</div>
<div class="r" style="top:273.1px;">
<div class="c n">12</div>
<div class="c" style="left:58.5px;width:210.8px;background:#f9fafb;letter-spacing:-0.354px;">Net_Equipment_Cash_Flow_Year10</div>
<div class="c" style="left:269.3px;width:124.7px;background:#f9fafb;letter-spacing:0.381px;">-50000000</div>
<div class="c" style="left:394.0px;width:124.4px;"></div>
<div class="c" style="left:518.4px;width:133.8px;"></div>
<div class="c" style="left:652.2px;width:134.8px;"></div>
<div class="c" style="left:787.0px;width:134.3px;"></div>
<div class="c" style="left:921.3px;width:136.8px;"></div>
<div class="c" style="left:1058.1px;width:135.9px;"></div>
<div class="c" style="left:1194.0px;width:135.9px;"></div>
<div class="c" style="left:1329.9px;width:140.1px;"></div>
</div>
<div class="r" style="top:295.6px;">
<div class="c n">13</div>
<div class="c" style="left:58.5px;width:210.8px;background:#f9fafb;letter-spacing:-0.317px;">Growth_Rate</div>
<div class="c" style="left:269.3px;width:124.7px;background:#f9fafb;letter-spacing:-0.326px;">0.02</div>
<div class="c" style="left:394.0px;width:124.4px;"></div>
<div class="c" style="left:518.4px;width:133.8px;"></div>
<div class="c" style="left:652.2px;width:134.8px;"></div>
<div class="c" style="left:787.0px;width:134.3px;"></div>
<div class="c" style="left:921.3px;width:136.8px;"></div>
<div class="c" style="left:1058.1px;width:135.9px;"></div>
<div class="c" style="left:1194.0px;width:135.9px;"></div>
<div class="c" style="left:1329.9px;width:140.1px;"></div>
</div>
<div class="r" style="top:318.1px;">
<div class="c n">14</div>
<div class="c" style="left:58.5px;width:210.8px;background:#f9fafb;letter-spacing:-0.387px;">Finance_Rate</div>
<div class="c" style="left:269.3px;width:124.7px;background:#f9fafb;letter-spacing:-0.176px;">0.08</div>
<div class="c" style="left:394.0px;width:124.4px;"></div>
<div class="c" style="left:518.4px;width:133.8px;"></div>
<div class="c" style="left:652.2px;width:134.8px;"></div>
<div class="c" style="left:787.0px;width:134.3px;"></div>
<div class="c" style="left:921.3px;width:136.8px;"></div>
<div class="c" style="left:1058.1px;width:135.9px;"></div>
<div class="c" style="left:1194.0px;width:135.9px;"></div>
<div class="c" style="left:1329.9px;width:140.1px;"></div>
</div>
<div class="r" style="top:340.6px;">
<div class="c n">15</div>
<div class="c" style="left:58.5px;width:210.8px;background:#f9fafb;letter-spacing:-0.359px;">Reinvest_Rate</div>
<div class="c" style="left:269.3px;width:124.7px;background:#f9fafb;letter-spacing:-1.024px;">0.1</div>
<div class="c" style="left:394.0px;width:124.4px;"></div>
<div class="c" style="left:518.4px;width:133.8px;"></div>
<div class="c" style="left:652.2px;width:134.8px;"></div>
<div class="c" style="left:787.0px;width:134.3px;"></div>
<div class="c" style="left:921.3px;width:136.8px;"></div>
<div class="c" style="left:1058.1px;width:135.9px;"></div>
<div class="c" style="left:1194.0px;width:135.9px;"></div>
<div class="c" style="left:1329.9px;width:140.1px;"></div>
</div>
<div class="r" style="top:363.1px;">
<div class="c n">16</div>
<div class="c" style="left:58.5px;width:210.8px;background:#f9fafb;letter-spacing:-0.135px;">Total_Capital</div>
<div class="c" style="left:269.3px;width:124.7px;background:#f9fafb;letter-spacing:0.248px;">220000000</div>
<div class="c" style="left:394.0px;width:124.4px;"></div>
<div class="c" style="left:518.4px;width:133.8px;"></div>
<div class="c" style="left:652.2px;width:134.8px;"></div>
<div class="c" style="left:787.0px;width:134.3px;"></div>
<div class="c" style="left:921.3px;width:136.8px;"></div>
<div class="c" style="left:1058.1px;width:135.9px;"></div>
<div class="c" style="left:1194.0px;width:135.9px;"></div>
<div class="c" style="left:1329.9px;width:140.1px;"></div>
</div>
<div class="r" style="top:385.7px;">
<div class="c n">17</div>
<div class="c" style="left:58.5px;width:210.8px;background:#f9fafb;letter-spacing:-0.984px;">WACC</div>
<div class="c" style="left:269.3px;width:124.7px;background:#f9fafb;letter-spacing:-0.610px;">0.1018</div>
<div class="c" style="left:394.0px;width:124.4px;"></div>
<div class="c" style="left:518.4px;width:133.8px;"></div>
<div class="c" style="left:652.2px;width:134.8px;"></div>
<div class="c" style="left:787.0px;width:134.3px;"></div>
<div class="c" style="left:921.3px;width:136.8px;"></div>
<div class="c" style="left:1058.1px;width:135.9px;"></div>
<div class="c" style="left:1194.0px;width:135.9px;"></div>
<div class="c" style="left:1329.9px;width:140.1px;"></div>
</div>
<div class="r" style="top:408.2px;">
<div class="c n">18</div>
<div class="c" style="left:58.5px;width:210.8px;"></div>
<div class="c" style="left:269.3px;width:124.7px;"></div>
<div class="c" style="left:394.0px;width:124.4px;"></div>
<div class="c" style="left:518.4px;width:133.8px;"></div>
<div class="c" style="left:652.2px;width:134.8px;"></div>
<div class="c" style="left:787.0px;width:134.3px;"></div>
<div class="c" style="left:921.3px;width:136.8px;"></div>
<div class="c" style="left:1058.1px;width:135.9px;"></div>
<div class="c" style="left:1194.0px;width:135.9px;"></div>
<div class="c" style="left:1329.9px;width:140.1px;"></div>
</div>
<div class="r" style="top:430.7px;">
<div class="c n">19</div>
<div class="c" style="left:58.5px;width:210.8px;"></div>
<div class="c" style="left:269.3px;width:124.7px;"></div>
<div class="c" style="left:394.0px;width:124.4px;"></div>
<div class="c" style="left:518.4px;width:133.8px;"></div>
<div class="c" style="left:652.2px;width:134.8px;"></div>
<div class="c" style="left:787.0px;width:134.3px;"></div>
<div class="c" style="left:921.3px;width:136.8px;"></div>
<div class="c" style="left:1058.1px;width:135.9px;"></div>
<div class="c" style="left:1194.0px;width:135.9px;"></div>
<div class="c" style="left:1329.9px;width:140.1px;"></div>
</div>
<div class="r" style="top:453.2px;">
<div class="c n">20</div>
<div class="c hd" style="left:58.5px;width:210.8px;letter-spacing:-0.165px;">Description</div>
<div class="c hd" style="left:269.3px;width:124.7px;letter-spacing:-0.150px;">Year-1</div>
<div class="c hd" style="left:394.0px;width:124.4px;letter-spacing:-0.150px;">Year-2</div>
<div class="c hd" style="left:518.4px;width:133.8px;letter-spacing:-0.150px;">Year-3</div>
<div class="c hd" style="left:652.2px;width:134.8px;letter-spacing:-0.150px;">Year-4</div>
<div class="c hd" style="left:787.0px;width:134.3px;letter-spacing:-0.150px;">Year-5</div>
<div class="c hd" style="left:921.3px;width:136.8px;letter-spacing:-0.150px;">Year-6</div>
<div class="c hd" style="left:1058.1px;width:135.9px;letter-spacing:-0.150px;">Year-7</div>
<div class="c hd" style="left:1194.0px;width:135.9px;letter-spacing:-0.150px;">Year-8</div>
<div class="c hd" style="left:1329.9px;width:140.1px;letter-spacing:-0.150px;">Year-9</div>
</div>
<div class="r" style="top:475.7px;">
<div class="c n">21</div>
<div class="c" style="left:58.5px;width:210.8px;background:#f1f5f9;letter-spacing:-0.190px;">Debt</div>
<div class="c" style="left:269.3px;width:124.7px;background:#f1f5f9;letter-spacing:-0.080px;">$100,000,000.00</div>
<div class="c" style="left:394.0px;width:124.4px;background:#f1f5f9;letter-spacing:-0.080px;">$100,000,000.00</div>
<div class="c" style="left:518.4px;width:133.8px;background:#f1f5f9;letter-spacing:-0.080px;">$100,000,000.00</div>
<div class="c" style="left:652.2px;width:134.8px;background:#f1f5f9;letter-spacing:-0.080px;">$100,000,000.00</div>
<div class="c" style="left:787.0px;width:134.3px;background:#f1f5f9;letter-spacing:-0.080px;">$100,000,000.00</div>
<div class="c" style="left:921.3px;width:136.8px;background:#f1f5f9;letter-spacing:-0.080px;">$100,000,000.00</div>
<div class="c" style="left:1058.1px;width:135.9px;background:#f1f5f9;letter-spacing:-0.080px;">$100,000,000.00</div>
<div class="c" style="left:1194.0px;width:135.9px;background:#f1f5f9;letter-spacing:-0.080px;">$100,000,000.00</div>
<div class="c" style="left:1329.9px;width:140.1px;background:#f1f5f9;letter-spacing:-0.080px;">$100,000,000.00</div>
</div>
<div class="r" style="top:498.2px;">
<div class="c n">22</div>
<div class="c" style="left:58.5px;width:210.8px;background:#f1f5f9;letter-spacing:-0.205px;">Equity</div>
<div class="c" style="left:269.3px;width:124.7px;background:#f1f5f9;letter-spacing:-0.080px;">$120,000,000.00</div>
<div class="c" style="left:394.0px;width:124.4px;background:#f1f5f9;letter-spacing:-0.080px;">$120,000,000.00</div>
<div class="c" style="left:518.4px;width:133.8px;background:#f1f5f9;letter-spacing:-0.080px;">$120,000,000.00</div>
<div class="c" style="left:652.2px;width:134.8px;background:#f1f5f9;letter-spacing:-0.080px;">$120,000,000.00</div>
<div class="c" style="left:787.0px;width:134.3px;background:#f1f5f9;letter-spacing:-0.080px;">$120,000,000.00</div>
<div class="c" style="left:921.3px;width:136.8px;background:#f1f5f9;letter-spacing:-0.080px;">$120,000,000.00</div>
<div class="c" style="left:1058.1px;width:135.9px;background:#f1f5f9;letter-spacing:-0.080px;">$120,000,000.00</div>
<div class="c" style="left:1194.0px;width:135.9px;background:#f1f5f9;letter-spacing:-0.080px;">$120,000,000.00</div>
<div class="c" style="left:1329.9px;width:140.1px;background:#f1f5f9;letter-spacing:-0.080px;">$120,000,000.00</div>
</div>
<div class="r" style="top:520.8px;">
<div class="c n">23</div>
<div class="c bd" style="left:58.5px;width:210.8px;background:#f1f5f9;border-bottom:3px double #8c95a3;height:23.7px;z-index:77;letter-spacing:-0.097px;">Total_Capital</div>
<div class="c bd" style="left:269.3px;width:124.7px;background:#f1f5f9;border-bottom:3px double #8c95a3;height:23.7px;z-index:77;letter-spacing:0.574px;">$220,000,000.00</div>
<div class="c bd" style="left:394.0px;width:124.4px;background:#f1f5f9;border-bottom:3px double #8c95a3;height:23.7px;z-index:77;letter-spacing:0.574px;">$220,000,000.00</div>
<div class="c bd" style="left:518.4px;width:133.8px;background:#f1f5f9;border-bottom:3px double #8c95a3;height:23.7px;z-index:77;letter-spacing:0.574px;">$220,000,000.00</div>
<div class="c bd" style="left:652.2px;width:134.8px;background:#f1f5f9;border-bottom:3px double #8c95a3;height:23.7px;z-index:77;letter-spacing:0.574px;">$220,000,000.00</div>
<div class="c bd" style="left:787.0px;width:134.3px;background:#f1f5f9;border-bottom:3px double #8c95a3;height:23.7px;z-index:77;letter-spacing:0.574px;">$220,000,000.00</div>
<div class="c bd" style="left:921.3px;width:136.8px;background:#f1f5f9;border-bottom:3px double #8c95a3;height:23.7px;z-index:77;letter-spacing:0.574px;">$220,000,000.00</div>
<div class="c bd" style="left:1058.1px;width:135.9px;background:#f1f5f9;border-bottom:3px double #8c95a3;height:23.7px;z-index:77;letter-spacing:0.574px;">$220,000,000.00</div>
<div class="c bd" style="left:1194.0px;width:135.9px;background:#f1f5f9;border-bottom:3px double #8c95a3;height:23.7px;z-index:77;letter-spacing:0.574px;">$220,000,000.00</div>
<div class="c bd" style="left:1329.9px;width:140.1px;background:#f1f5f9;border-bottom:3px double #8c95a3;height:23.7px;z-index:77;letter-spacing:0.574px;">$220,000,000.00</div>
</div>
<div class="r" style="top:543.3px;">
<div class="c n">24</div>
<div class="c" style="left:58.5px;width:210.8px;background:#f1f5f9;letter-spacing:-0.099px;">Cost_of_Debt</div>
<div class="c" style="left:269.3px;width:124.7px;background:#f1f5f9;letter-spacing:-0.176px;">0.08</div>
<div class="c" style="left:394.0px;width:124.4px;background:#f1f5f9;letter-spacing:-0.176px;">0.08</div>
<div class="c" style="left:518.4px;width:133.8px;background:#f1f5f9;letter-spacing:-0.176px;">0.08</div>
<div class="c" style="left:652.2px;width:134.8px;background:#f1f5f9;letter-spacing:-0.176px;">0.08</div>
<div class="c" style="left:787.0px;width:134.3px;background:#f1f5f9;letter-spacing:-0.176px;">0.08</div>
<div class="c" style="left:921.3px;width:136.8px;background:#f1f5f9;letter-spacing:-0.176px;">0.08</div>
<div class="c" style="left:1058.1px;width:135.9px;background:#f1f5f9;letter-spacing:-0.176px;">0.08</div>
<div class="c" style="left:1194.0px;width:135.9px;background:#f1f5f9;letter-spacing:-0.176px;">0.08</div>
<div class="c" style="left:1329.9px;width:140.1px;background:#f1f5f9;letter-spacing:-0.176px;">0.08</div>
</div>
<div class="r" style="top:565.8px;">
<div class="c n">25</div>
<div class="c" style="left:58.5px;width:210.8px;background:#f1f5f9;letter-spacing:-0.119px;">Cost_of_Equity</div>
<div class="c" style="left:269.3px;width:124.7px;background:#f1f5f9;letter-spacing:-0.801px;">0.12</div>
<div class="c" style="left:394.0px;width:124.4px;background:#f1f5f9;letter-spacing:-0.801px;">0.12</div>
<div class="c" style="left:518.4px;width:133.8px;background:#f1f5f9;letter-spacing:-0.801px;">0.12</div>
<div class="c" style="left:652.2px;width:134.8px;background:#f1f5f9;letter-spacing:-0.801px;">0.12</div>
<div class="c" style="left:787.0px;width:134.3px;background:#f1f5f9;letter-spacing:-0.801px;">0.12</div>
<div class="c" style="left:921.3px;width:136.8px;background:#f1f5f9;letter-spacing:-0.801px;">0.12</div>
<div class="c" style="left:1058.1px;width:135.9px;background:#f1f5f9;letter-spacing:-0.801px;">0.12</div>
<div class="c" style="left:1194.0px;width:135.9px;background:#f1f5f9;letter-spacing:-0.801px;">0.12</div>
<div class="c" style="left:1329.9px;width:140.1px;background:#f1f5f9;letter-spacing:-0.801px;">0.12</div>
</div>
<div class="r" style="top:588.3px;">
<div class="c n">26</div>
<div class="c" style="left:58.5px;width:210.8px;background:#f1f5f9;border-bottom:3px double #c3c9d3;height:23.7px;z-index:74;letter-spacing:-0.984px;">WACC</div>
<div class="c" style="left:269.3px;width:124.7px;background:#f1f5f9;border-bottom:3px double #c3c9d3;height:23.7px;z-index:74;letter-spacing:-0.527px;">0.102</div>
<div class="c" style="left:394.0px;width:124.4px;background:#f1f5f9;border-bottom:3px double #c3c9d3;height:23.7px;z-index:74;letter-spacing:-0.527px;">0.102</div>
<div class="c" style="left:518.4px;width:133.8px;background:#f1f5f9;border-bottom:3px double #c3c9d3;height:23.7px;z-index:74;letter-spacing:-0.527px;">0.102</div>
<div class="c" style="left:652.2px;width:134.8px;background:#f1f5f9;border-bottom:3px double #c3c9d3;height:23.7px;z-index:74;letter-spacing:-0.527px;">0.102</div>
<div class="c" style="left:787.0px;width:134.3px;background:#f1f5f9;border-bottom:3px double #c3c9d3;height:23.7px;z-index:74;letter-spacing:-0.527px;">0.102</div>
<div class="c" style="left:921.3px;width:136.8px;background:#f1f5f9;border-bottom:3px double #c3c9d3;height:23.7px;z-index:74;letter-spacing:-0.527px;">0.102</div>
<div class="c" style="left:1058.1px;width:135.9px;background:#f1f5f9;border-bottom:3px double #c3c9d3;height:23.7px;z-index:74;letter-spacing:-0.527px;">0.102</div>
<div class="c" style="left:1194.0px;width:135.9px;background:#f1f5f9;border-bottom:3px double #c3c9d3;height:23.7px;z-index:74;letter-spacing:-0.527px;">0.102</div>
<div class="c" style="left:1329.9px;width:140.1px;background:#f1f5f9;border-bottom:3px double #c3c9d3;height:23.7px;z-index:74;letter-spacing:-0.527px;">0.102</div>
</div>
<div class="r" style="top:610.8px;">
<div class="c n">27</div>
<div class="c" style="left:58.5px;width:210.8px;"></div>
<div class="c" style="left:269.3px;width:124.7px;"></div>
<div class="c" style="left:394.0px;width:124.4px;"></div>
<div class="c" style="left:518.4px;width:133.8px;"></div>
<div class="c" style="left:652.2px;width:134.8px;"></div>
<div class="c" style="left:787.0px;width:134.3px;"></div>
<div class="c" style="left:921.3px;width:136.8px;"></div>
<div class="c" style="left:1058.1px;width:135.9px;"></div>
<div class="c" style="left:1194.0px;width:135.9px;"></div>
<div class="c" style="left:1329.9px;width:140.1px;"></div>
</div>
<div class="r" style="top:633.3px;">
<div class="c n">28</div>
<div class="c bd" style="left:58.5px;width:210.8px;background:#f3f4f6;letter-spacing:-0.407px;">Gross_Revenue</div>
<div class="c bd" style="left:269.3px;width:124.7px;background:#f3f4f6;letter-spacing:0.394px;">$0.00</div>
<div class="c bd" style="left:394.0px;width:124.4px;background:#f3f4f6;letter-spacing:0.394px;">$0.00</div>
<div class="c bd" style="left:518.4px;width:133.8px;background:#f3f4f6;letter-spacing:0.394px;">$0.00</div>
<div class="c bd" style="left:652.2px;width:134.8px;background:#f3f4f6;letter-spacing:0.394px;">$0.00</div>
<div class="c bd" style="left:787.0px;width:134.3px;background:#f3f4f6;letter-spacing:0.394px;">$0.00</div>
<div class="c bd" style="left:921.3px;width:136.8px;background:#f3f4f6;letter-spacing:0.394px;">$0.00</div>
<div class="c bd" style="left:1058.1px;width:135.9px;background:#f3f4f6;letter-spacing:0.394px;">$0.00</div>
<div class="c bd" style="left:1194.0px;width:135.9px;background:#f3f4f6;letter-spacing:0.394px;">$0.00</div>
<div class="c bd" style="left:1329.9px;width:140.1px;background:#f3f4f6;letter-spacing:0.394px;">$0.00</div>
</div>
<div class="r" style="top:655.9px;">
<div class="c n">29</div>
<div class="c" style="left:58.5px;width:210.8px;background:#f3f4f6;border-bottom:3px double #8c95a3;height:23.7px;z-index:71;letter-spacing:-0.117px;">Operating_Costs</div>
<div class="c" style="left:269.3px;width:124.7px;background:#f3f4f6;border-bottom:3px double #8c95a3;height:23.7px;z-index:71;letter-spacing:-0.080px;">$415,000,000.00</div>
<div class="c" style="left:394.0px;width:124.4px;background:#f3f4f6;border-bottom:3px double #8c95a3;height:23.7px;z-index:71;letter-spacing:-0.080px;">$415,000,000.00</div>
<div class="c" style="left:518.4px;width:133.8px;background:#f3f4f6;border-bottom:3px double #8c95a3;height:23.7px;z-index:71;letter-spacing:-0.080px;">$415,000,000.00</div>
<div class="c" style="left:652.2px;width:134.8px;background:#f3f4f6;border-bottom:3px double #8c95a3;height:23.7px;z-index:71;letter-spacing:-0.080px;">$415,000,000.00</div>
<div class="c" style="left:787.0px;width:134.3px;background:#f3f4f6;border-bottom:3px double #8c95a3;height:23.7px;z-index:71;letter-spacing:-0.080px;">$415,000,000.00</div>
<div class="c" style="left:921.3px;width:136.8px;background:#f3f4f6;border-bottom:3px double #8c95a3;height:23.7px;z-index:71;letter-spacing:-0.080px;">$415,000,000.00</div>
<div class="c" style="left:1058.1px;width:135.9px;background:#f3f4f6;border-bottom:3px double #8c95a3;height:23.7px;z-index:71;letter-spacing:-0.080px;">$415,000,000.00</div>
<div class="c" style="left:1194.0px;width:135.9px;background:#f3f4f6;border-bottom:3px double #8c95a3;height:23.7px;z-index:71;letter-spacing:-0.080px;">$415,000,000.00</div>
<div class="c" style="left:1329.9px;width:140.1px;background:#f3f4f6;border-bottom:3px double #8c95a3;height:23.7px;z-index:71;letter-spacing:-0.080px;">$415,000,000.00</div>
</div>
<div class="r" style="top:678.4px;">
<div class="c n">30</div>
<div class="c bd" style="left:58.5px;width:210.8px;background:#fff;letter-spacing:-0.715px;">EBITDA</div>
<div class="c bd" style="left:269.3px;width:124.7px;background:#fff;letter-spacing:0.523px;">-$415,000,000.00</div>
<div class="c bd" style="left:394.0px;width:124.4px;background:#fff;letter-spacing:0.523px;">-$415,000,000.00</div>
<div class="c bd" style="left:518.4px;width:133.8px;background:#fff;letter-spacing:0.523px;">-$415,000,000.00</div>
<div class="c bd" style="left:652.2px;width:134.8px;background:#fff;letter-spacing:0.523px;">-$415,000,000.00</div>
<div class="c bd" style="left:787.0px;width:134.3px;background:#fff;letter-spacing:0.523px;">-$415,000,000.00</div>
<div class="c bd" style="left:921.3px;width:136.8px;background:#fff;letter-spacing:0.523px;">-$415,000,000.00</div>
<div class="c bd" style="left:1058.1px;width:135.9px;background:#fff;letter-spacing:0.523px;">-$415,000,000.00</div>
<div class="c bd" style="left:1194.0px;width:135.9px;background:#fff;letter-spacing:0.523px;">-$415,000,000.00</div>
<div class="c bd" style="left:1329.9px;width:140.1px;background:#fff;letter-spacing:0.523px;">-$415,000,000.00</div>
</div>
<div class="r" style="top:700.9px;">
<div class="c n">31</div>
<div class="c" style="left:58.5px;width:210.8px;background:#fff;color:#4b5563;letter-spacing:-0.974px;">EBIT</div>
<div class="c" style="left:269.3px;width:124.7px;background:#fff;color:#4b5563;letter-spacing:0.011px;">-$415,000,000.00</div>
<div class="c" style="left:394.0px;width:124.4px;background:#fff;color:#4b5563;letter-spacing:0.011px;">-$415,000,000.00</div>
<div class="c" style="left:518.4px;width:133.8px;background:#fff;color:#4b5563;letter-spacing:0.011px;">-$415,000,000.00</div>
<div class="c" style="left:652.2px;width:134.8px;background:#fff;color:#4b5563;letter-spacing:0.011px;">-$415,000,000.00</div>
<div class="c" style="left:787.0px;width:134.3px;background:#fff;color:#4b5563;letter-spacing:0.011px;">-$415,000,000.00</div>
<div class="c" style="left:921.3px;width:136.8px;background:#fff;color:#4b5563;letter-spacing:0.011px;">-$415,000,000.00</div>
<div class="c" style="left:1058.1px;width:135.9px;background:#fff;color:#4b5563;letter-spacing:0.011px;">-$415,000,000.00</div>
<div class="c" style="left:1194.0px;width:135.9px;background:#fff;color:#4b5563;letter-spacing:0.011px;">-$415,000,000.00</div>
<div class="c" style="left:1329.9px;width:140.1px;background:#fff;color:#4b5563;letter-spacing:0.011px;">-$415,000,000.00</div>
</div>
<div class="r" style="top:723.4px;">
<div class="c n">32</div>
<div class="c bd" style="left:58.5px;width:210.8px;background:#fff;letter-spacing:-0.071px;">Net_Operating_Income</div>
<div class="c bd" style="left:269.3px;width:124.7px;background:#fff;letter-spacing:0.523px;">-$415,000,000.00</div>
<div class="c bd" style="left:394.0px;width:124.4px;background:#fff;letter-spacing:0.523px;">-$415,000,000.00</div>
<div class="c bd" style="left:518.4px;width:133.8px;background:#fff;letter-spacing:0.523px;">-$415,000,000.00</div>
<div class="c bd" style="left:652.2px;width:134.8px;background:#fff;letter-spacing:0.523px;">-$415,000,000.00</div>
<div class="c bd" style="left:787.0px;width:134.3px;background:#fff;letter-spacing:0.523px;">-$415,000,000.00</div>
<div class="c bd" style="left:921.3px;width:136.8px;background:#fff;letter-spacing:0.523px;">-$415,000,000.00</div>
<div class="c bd" style="left:1058.1px;width:135.9px;background:#fff;letter-spacing:0.523px;">-$415,000,000.00</div>
<div class="c bd" style="left:1194.0px;width:135.9px;background:#fff;letter-spacing:0.523px;">-$415,000,000.00</div>
<div class="c bd" style="left:1329.9px;width:140.1px;background:#fff;letter-spacing:0.523px;">-$415,000,000.00</div>
</div>
<div class="r" style="top:745.9px;">
<div class="c n">33</div>
<div class="c bd" style="left:58.5px;width:210.8px;background:#fff;letter-spacing:-0.273px;">Free_Cash_Flow</div>
<div class="c bd" style="left:269.3px;width:124.7px;background:#fff;letter-spacing:0.523px;">-$415,000,000.00</div>
<div class="c bd" style="left:394.0px;width:124.4px;background:#fff;letter-spacing:0.523px;">-$415,000,000.00</div>
<div class="c bd" style="left:518.4px;width:133.8px;background:#fff;letter-spacing:0.523px;">-$415,000,000.00</div>
<div class="c bd" style="left:652.2px;width:134.8px;background:#fff;letter-spacing:0.523px;">-$415,000,000.00</div>
<div class="c bd" style="left:787.0px;width:134.3px;background:#fff;letter-spacing:0.523px;">-$415,000,000.00</div>
<div class="c bd" style="left:921.3px;width:136.8px;background:#fff;letter-spacing:0.523px;">-$415,000,000.00</div>
<div class="c bd" style="left:1058.1px;width:135.9px;background:#fff;letter-spacing:0.523px;">-$415,000,000.00</div>
<div class="c bd" style="left:1194.0px;width:135.9px;background:#fff;letter-spacing:0.523px;">-$415,000,000.00</div>
<div class="c bd" style="left:1329.9px;width:140.1px;background:#fff;letter-spacing:0.523px;">-$415,000,000.00</div>
</div>
<div class="r" style="top:768.4px;">
<div class="c n">34</div>
<div class="c bd" style="left:58.5px;width:210.8px;background:#fff;border-bottom:3px solid #e2e7ee;height:23.1px;z-index:66;letter-spacing:-0.305px;">IRR_Cash_Flow_Series</div>
<div class="c bd" style="left:269.3px;width:124.7px;background:#fff;border-bottom:3px solid #e2e7ee;height:23.1px;z-index:66;letter-spacing:0.655px;">-$200,000,000.00</div>
<div class="c bd" style="left:394.0px;width:124.4px;background:#fff;border-bottom:3px solid #e2e7ee;height:23.1px;z-index:66;letter-spacing:0.523px;">-$415,000,000.00</div>
<div class="c bd" style="left:518.4px;width:133.8px;background:#fff;border-bottom:3px solid #e2e7ee;height:23.1px;z-index:66;letter-spacing:0.523px;">-$415,000,000.00</div>
<div class="c bd" style="left:652.2px;width:134.8px;background:#fff;border-bottom:3px solid #e2e7ee;height:23.1px;z-index:66;letter-spacing:0.523px;">-$415,000,000.00</div>
<div class="c bd" style="left:787.0px;width:134.3px;background:#fff;border-bottom:3px solid #e2e7ee;height:23.1px;z-index:66;letter-spacing:0.523px;">-$415,000,000.00</div>
<div class="c bd" style="left:921.3px;width:136.8px;background:#fff;border-bottom:3px solid #e2e7ee;height:23.1px;z-index:66;letter-spacing:0.523px;">-$415,000,000.00</div>
<div class="c bd" style="left:1058.1px;width:135.9px;background:#fff;border-bottom:3px solid #e2e7ee;height:23.1px;z-index:66;letter-spacing:0.523px;">-$415,000,000.00</div>
<div class="c bd" style="left:1194.0px;width:135.9px;background:#fff;border-bottom:3px solid #e2e7ee;height:23.1px;z-index:66;letter-spacing:0.523px;">-$415,000,000.00</div>
<div class="c bd" style="left:1329.9px;width:140.1px;background:#fff;border-bottom:3px solid #e2e7ee;height:23.1px;z-index:66;letter-spacing:0.523px;">-$415,000,000.00</div>
</div>
<div class="r" style="top:791.0px;">
<div class="c n">35</div>
<div class="c" style="left:58.5px;width:210.8px;"></div>
<div class="c" style="left:269.3px;width:124.7px;"></div>
<div class="c" style="left:394.0px;width:124.4px;"></div>
<div class="c" style="left:518.4px;width:133.8px;"></div>
<div class="c" style="left:652.2px;width:134.8px;"></div>
<div class="c" style="left:787.0px;width:134.3px;"></div>
<div class="c" style="left:921.3px;width:136.8px;"></div>
<div class="c" style="left:1058.1px;width:135.9px;"></div>
<div class="c" style="left:1194.0px;width:135.9px;"></div>
<div class="c" style="left:1329.9px;width:140.1px;"></div>
</div>
<div class="r" style="top:813.5px;">
<div class="c n">36</div>
<div class="c" style="left:58.5px;width:210.8px;background:#f1f5f9;letter-spacing:-0.042px;">Debt_Interest</div>
<div class="c" style="left:269.3px;width:124.7px;background:#f1f5f9;letter-spacing:0.028px;">$8,000,000.00</div>
<div class="c" style="left:394.0px;width:124.4px;background:#f1f5f9;letter-spacing:-0.006px;">$0.00</div>
<div class="c" style="left:518.4px;width:133.8px;background:#f1f5f9;letter-spacing:-0.006px;">$0.00</div>
<div class="c" style="left:652.2px;width:134.8px;background:#f1f5f9;letter-spacing:-0.006px;">$0.00</div>
<div class="c" style="left:787.0px;width:134.3px;background:#f1f5f9;letter-spacing:-0.006px;">$0.00</div>
<div class="c" style="left:921.3px;width:136.8px;background:#f1f5f9;letter-spacing:-0.006px;">$0.00</div>
<div class="c" style="left:1058.1px;width:135.9px;background:#f1f5f9;letter-spacing:-0.006px;">$0.00</div>
<div class="c" style="left:1194.0px;width:135.9px;background:#f1f5f9;letter-spacing:-0.006px;">$0.00</div>
<div class="c" style="left:1329.9px;width:140.1px;background:#f1f5f9;letter-spacing:-0.006px;">$0.00</div>
</div>
<div class="r" style="top:836.0px;">
<div class="c n">37</div>
<div class="c" style="left:58.5px;width:210.8px;background:#f1f5f9;letter-spacing:-0.075px;">Debt_Principal</div>
<div class="c" style="left:269.3px;width:124.7px;background:#f1f5f9;letter-spacing:0.028px;">$8,000,000.00</div>
<div class="c" style="left:394.0px;width:124.4px;background:#f1f5f9;letter-spacing:-0.006px;">$0.00</div>
<div class="c" style="left:518.4px;width:133.8px;background:#f1f5f9;letter-spacing:0.028px;">$8,000,000.00</div>
<div class="c" style="left:652.2px;width:134.8px;background:#f1f5f9;letter-spacing:0.028px;">$8,000,000.00</div>
<div class="c" style="left:787.0px;width:134.3px;background:#f1f5f9;letter-spacing:0.028px;">$8,000,000.00</div>
<div class="c" style="left:921.3px;width:136.8px;background:#f1f5f9;letter-spacing:0.028px;">$8,000,000.00</div>
<div class="c" style="left:1058.1px;width:135.9px;background:#f1f5f9;letter-spacing:0.028px;">$8,000,000.00</div>
<div class="c" style="left:1194.0px;width:135.9px;background:#f1f5f9;letter-spacing:0.028px;">$8,000,000.00</div>
<div class="c" style="left:1329.9px;width:140.1px;background:#f1f5f9;letter-spacing:0.028px;">$8,000,000.00</div>
</div>
<div class="r" style="top:858.5px;">
<div class="c n">38</div>
<div class="c" style="left:58.5px;width:210.8px;background:#f1f5f9;border-bottom:3px solid #cfd6e0;height:23.1px;z-index:62;letter-spacing:-0.224px;">Debt_Payment</div>
<div class="c" style="left:269.3px;width:124.7px;background:#f1f5f9;border-bottom:3px solid #cfd6e0;height:23.1px;z-index:62;letter-spacing:0.028px;">$8,000,000.00</div>
<div class="c" style="left:394.0px;width:124.4px;background:#f1f5f9;border-bottom:3px solid #cfd6e0;height:23.1px;z-index:62;letter-spacing:0.028px;">$8,000,000.00</div>
<div class="c" style="left:518.4px;width:133.8px;background:#f1f5f9;border-bottom:3px solid #cfd6e0;height:23.1px;z-index:62;letter-spacing:0.028px;">$8,000,000.00</div>
<div class="c" style="left:652.2px;width:134.8px;background:#f1f5f9;border-bottom:3px solid #cfd6e0;height:23.1px;z-index:62;letter-spacing:0.028px;">$8,000,000.00</div>
<div class="c" style="left:787.0px;width:134.3px;background:#f1f5f9;border-bottom:3px solid #cfd6e0;height:23.1px;z-index:62;letter-spacing:0.028px;">$8,000,000.00</div>
<div class="c" style="left:921.3px;width:136.8px;background:#f1f5f9;border-bottom:3px solid #cfd6e0;height:23.1px;z-index:62;letter-spacing:0.028px;">$8,000,000.00</div>
<div class="c" style="left:1058.1px;width:135.9px;background:#f1f5f9;border-bottom:3px solid #cfd6e0;height:23.1px;z-index:62;letter-spacing:0.028px;">$8,000,000.00</div>
<div class="c" style="left:1194.0px;width:135.9px;background:#f1f5f9;border-bottom:3px solid #cfd6e0;height:23.1px;z-index:62;letter-spacing:0.028px;">$8,000,000.00</div>
<div class="c" style="left:1329.9px;width:140.1px;background:#f1f5f9;border-bottom:3px solid #cfd6e0;height:23.1px;z-index:62;letter-spacing:0.028px;">$8,000,000.00</div>
</div>
<div class="r" style="top:881.0px;">
<div class="c n">39</div>
<div class="c" style="left:58.5px;width:210.8px;background:#f9fafb;border-bottom:3px double #c3c9d3;height:23.7px;z-index:61;letter-spacing:-1.259px;">DSCR</div>
<div class="c" style="left:269.3px;width:124.7px;background:#f9fafb;border-bottom:3px double #c3c9d3;height:23.7px;z-index:61;letter-spacing:-0.199px;">-51.875</div>
<div class="c" style="left:394.0px;width:124.4px;background:#f9fafb;border-bottom:3px double #c3c9d3;height:23.7px;z-index:61;letter-spacing:-0.199px;">-51.875</div>
<div class="c" style="left:518.4px;width:133.8px;background:#f9fafb;border-bottom:3px double #c3c9d3;height:23.7px;z-index:61;letter-spacing:-0.199px;">-51.875</div>
<div class="c" style="left:652.2px;width:134.8px;background:#f9fafb;border-bottom:3px double #c3c9d3;height:23.7px;z-index:61;letter-spacing:-0.199px;">-51.875</div>
<div class="c" style="left:787.0px;width:134.3px;background:#f9fafb;border-bottom:3px double #c3c9d3;height:23.7px;z-index:61;letter-spacing:-0.199px;">-51.875</div>
<div class="c" style="left:921.3px;width:136.8px;background:#f9fafb;border-bottom:3px double #c3c9d3;height:23.7px;z-index:61;letter-spacing:-0.199px;">-51.875</div>
<div class="c" style="left:1058.1px;width:135.9px;background:#f9fafb;border-bottom:3px double #c3c9d3;height:23.7px;z-index:61;letter-spacing:-0.199px;">-51.875</div>
<div class="c" style="left:1194.0px;width:135.9px;background:#f9fafb;border-bottom:3px double #c3c9d3;height:23.7px;z-index:61;letter-spacing:-0.199px;">-51.875</div>
<div class="c" style="left:1329.9px;width:140.1px;background:#f9fafb;border-bottom:3px double #c3c9d3;height:23.7px;z-index:61;letter-spacing:-0.199px;">-51.875</div>
</div>
<div class="r" style="top:903.5px;">
<div class="c n">40</div>
<div class="c" style="left:58.5px;width:210.8px;"></div>
<div class="c" style="left:269.3px;width:124.7px;"></div>
<div class="c" style="left:394.0px;width:124.4px;"></div>
<div class="c" style="left:518.4px;width:133.8px;"></div>
<div class="c" style="left:652.2px;width:134.8px;"></div>
<div class="c" style="left:787.0px;width:134.3px;"></div>
<div class="c" style="left:921.3px;width:136.8px;"></div>
<div class="c" style="left:1058.1px;width:135.9px;"></div>
<div class="c" style="left:1194.0px;width:135.9px;"></div>
<div class="c" style="left:1329.9px;width:140.1px;"></div>
</div>
</div>
<div class="b" style="left:1394.0px;top:206.2px;width:3.5px;height:18.0px;background:#e0e3e8;"></div>
<div class="b" style="left:1397.0px;top:162.0px;width:1.0px;height:1022.0px;background:#eceef1;"></div>
<div class="b" style="left:0.0px;top:162.0px;width:1.0px;height:1022.0px;background:#e6e9ee;"></div>
<div class="b" style="left:1.0px;top:1120.6px;width:19.5px;height:2.6px;background:#e4e7eb;"></div>
<div class="b" style="left:0.0px;top:1123.2px;width:1397.5px;height:61.0px;background:#f8f9fb;border-top:1px solid #eceef1;"></div>
<div class="b" style="left:19.8px;top:1134.0px;width:113.2px;height:40.6px;background:#f3e8ff;border-radius:10px;"></div>
<svg class="i" style="left:35.2px;top:1144.5px;color:#9333ea;" width="19.5" height="19.5" viewBox="0 0 24 24" fill="none" stroke="currentColor" stroke-width="1.9" stroke-linecap="round" stroke-linejoin="round"><path d="M15 2H6a2 2 0 0 0-2 2v16a2 2 0 0 0 2 2h12a2 2 0 0 0 2-2V7Z"/><path d="M14 2v4a2 2 0 0 0 2 2h4"/><path d="M10 9H8"/><path d="M16 13H8"/><path d="M16 17H8"/></svg>
<span class="t" style="left:64.5px;top:1143.1px;line-height:23px;font-size:16.6px;color:#9333ea;letter-spacing:-0.069px;-webkit-text-stroke:.25px;">Sheet1</span>
<svg class="i" style="left:1302.4px;top:1144.9px;color:#374151;" width="19" height="19" viewBox="0 0 24 24" fill="none" stroke="currentColor" stroke-width="2" stroke-linecap="round" stroke-linejoin="round"><path d="M5 12h14"/><path d="M12 5v14"/></svg>
<svg class="i" style="left:1350.2px;top:1145.0px;color:#374151;" width="18.5" height="18.5" viewBox="0 0 24 24" fill="none" stroke="currentColor" stroke-width="2" stroke-linecap="round" stroke-linejoin="round"><circle cx="12" cy="12" r="1" fill="currentColor"/><circle cx="12" cy="5" r="1" fill="currentColor"/><circle cx="12" cy="19" r="1" fill="currentColor"/></svg>
</div>
<div class="b" style="left:1407.0px;top:0.0px;width:2.0px;height:1184.0px;background:#e3e5e9;"></div>
<div class="b" style="left:1401.6px;top:588.0px;width:1.2px;height:1.2px;background:#c9cdd4;"></div>
<div class="b" style="left:1403.8px;top:588.0px;width:1.2px;height:1.2px;background:#c9cdd4;"></div>
<div class="b" style="left:1401.6px;top:591.0px;width:1.2px;height:1.2px;background:#c9cdd4;"></div>
<div class="b" style="left:1403.8px;top:591.0px;width:1.2px;height:1.2px;background:#c9cdd4;"></div>
<div class="b" style="left:1401.6px;top:594.0px;width:1.2px;height:1.2px;background:#c9cdd4;"></div>
<div class="b" style="left:1403.8px;top:594.0px;width:1.2px;height:1.2px;background:#c9cdd4;"></div>
<div class="b" style="left:1411.0px;top:68.0px;width:637.0px;height:888.5px;background:#eff3f6;"></div>
<div class="b" style="left:1430.5px;top:20.5px;width:46.0px;height:46.5px;background:#eff2f5;border:1px solid #f1eff8;border-radius:12px;box-shadow:0 0 3px rgba(120,100,160,.10);"></div>
<svg class="i" style="left:1440.8px;top:30.6px;color:#9333ea;" width="24" height="24" viewBox="0 0 24 24" fill="none" stroke="currentColor" stroke-width="2" stroke-linecap="round" stroke-linejoin="round"><path d="M12 8V4H8"/><rect width="16" height="12" x="4" y="8" rx="2"/><path d="M2 14h2"/><path d="M20 14h2"/><path d="M15 13v2"/><path d="M9 13v2"/></svg>
<svg class="i" style="left:1455.8px;top:45.8px" width="11" height="11" viewBox="0 0 24 24" fill="#eff2f5" stroke="#9333ea" stroke-width="3" stroke-linecap="round" stroke-linejoin="round"><circle cx="12" cy="12" r="9"/><circle cx="12" cy="12" r="3.200" fill="none"/></svg>
<div class="b" style="left:1472.1px;top:14.5px;width:9.0px;height:9.0px;background:#9fd5aa;border-radius:50%;"></div>
<span class="t" style="left:1493.3px;top:20.3px;line-height:27px;font-size:19px;color:#111827;font-weight:700;letter-spacing:-0.445px;">Dexsa AI</span>
<svg class="i" style="left:1580.1px;top:25.9px;color:#c9a8f7;transform:scaleX(-1);" width="15" height="15" viewBox="0 0 24 24" fill="none" stroke="currentColor" stroke-width="1.7" stroke-linecap="round" stroke-linejoin="round"><path d="M9.937 15.5A2 2 0 0 0 8.5 14.063l-6.135-1.582a.5.5 0 0 1 0-.962L8.5 9.936A2 2 0 0 0 9.937 8.5l1.582-6.135a.5.5 0 0 1 .963 0L14.063 8.5A2 2 0 0 0 15.5 9.937l6.135 1.581a.5.5 0 0 1 0 .964L15.5 14.063a2 2 0 0 0-1.437 1.437l-1.582 6.135a.5.5 0 0 1-.963 0z"/><path d="M20 3v4"/><path d="M22 5h-4"/><path d="M4 17v2"/><path d="M5 18H3"/></svg>
<div class="b" style="left:1492.4px;top:53.8px;width:6.4px;height:6.4px;background:#3db553;border-radius:50%;"></div>
<span class="t" style="left:1504.4px;top:46.6px;line-height:20px;font-size:14.4px;color:#18ad36;letter-spacing:0.369px;-webkit-text-stroke:.25px;">Active session</span>
<div class="b" style="left:1703.2px;top:25.2px;width:93.4px;height:35.0px;background:#fff;border:1px solid #dfe3ea;border-radius:10px;"></div>
<svg class="i" style="left:1718.4px;top:35.4px;color:#9333ea;" width="14" height="14" viewBox="0 0 24 24" fill="none" stroke="currentColor" stroke-width="2" stroke-linecap="round" stroke-linejoin="round"><rect width="16" height="16" x="4" y="4" rx="2"/><rect width="6" height="6" x="9" y="9" rx="1"/><path d="M15 2v2"/><path d="M15 20v2"/><path d="M2 15h2"/><path d="M2 9h2"/><path d="M20 15h2"/><path d="M20 9h2"/><path d="M9 2v2"/><path d="M9 20v2"/></svg>
<span class="t" style="left:1740.0px;top:32.5px;line-height:20px;font-size:14.3px;color:#374151;letter-spacing:0.349px;-webkit-text-stroke:.25px;">Quant</span>
<div class="b" style="left:1801.9px;top:25.2px;width:95.8px;height:35.0px;background:#fff;border:1px solid #dfe3ea;border-radius:10px;"></div>
<svg class="i" style="left:1817.0px;top:35.4px;color:#9333ea;" width="14" height="14" viewBox="0 0 24 24" fill="none" stroke="currentColor" stroke-width="2" stroke-linecap="round" stroke-linejoin="round"><path d="M3 7v6h6"/><path d="M21 17a9 9 0 0 0-9-9 9 9 0 0 0-6 2.3L3 13"/></svg>
<span class="t" style="left:1838.9px;top:32.5px;line-height:20px;font-size:14.3px;color:#374151;letter-spacing:0.147px;-webkit-text-stroke:.25px;">Revert</span>
<div class="b" style="left:1902.9px;top:25.2px;width:87.8px;height:35.0px;background:#fff;border:1px solid #dfe3ea;border-radius:10px;"></div>
<svg class="i" style="left:1919.0px;top:35.4px;color:#9333ea;" width="14" height="14" viewBox="0 0 24 24" fill="none" stroke="currentColor" stroke-width="2" stroke-linecap="round" stroke-linejoin="round"><path d="M3 6h18"/><path d="M19 6v14c0 1-1 2-2 2H7c-1 0-2-1-2-2V6"/><path d="M8 6V4c0-1 1-2 2-2h4c1 0 2 1 2 2v2"/><line x1="10" x2="10" y1="11" y2="17"/><line x1="14" x2="14" y1="11" y2="17"/></svg>
<span class="t" style="left:1940.0px;top:32.5px;line-height:20px;font-size:14.3px;color:#374151;letter-spacing:0.165px;-webkit-text-stroke:.25px;">Clear</span>
<div class="b" style="left:1996.3px;top:25.8px;width:32.5px;height:33.0px;background:#fff;border:1px solid #dfe3ea;border-radius:10px;"></div>
<svg class="i" style="left:2004.4px;top:34.6px;color:#9333ea;" width="16" height="16" viewBox="0 0 24 24" fill="none" stroke="currentColor" stroke-width="2" stroke-linecap="round" stroke-linejoin="round"><path d="m9 18 6-6-6-6"/></svg>
<span class="t" style="left:1433.2px;top:83.95px;line-height:31px;font-size:18.7px;color:#2f3947;letter-spacing:0.005px;text-shadow:0 0 2px #fff,0 0 2px #fff,0 0 3px #fff,0 0 3px #fff;">FCF = NOI + Depreciation – CapEx</span>
<span class="t" style="left:1434.6px;top:128.95px;line-height:31px;font-size:18.7px;color:#2f3947;letter-spacing:0.024px;text-shadow:0 0 2px #fff,0 0 2px #fff,0 0 3px #fff,0 0 3px #fff;"><span style="font-size:13.5px;position:relative;top:0.400px;margin-right:2.600px;">•</span> <span style="font-weight:700;color:#111827;">Debt Service &amp; DSCR:</span> Interest = Debt_Balance·8 %,</span>
<span class="t" style="left:1433.2px;top:159.95px;line-height:31px;font-size:18.7px;color:#2f3947;letter-spacing:0.003px;text-shadow:0 0 2px #fff,0 0 2px #fff,0 0 3px #fff,0 0 3px #fff;">Principal = Payment-Interest, DSCR = NOI / Debt_Payment</span>
<span class="t" style="left:1433.2px;top:190.95px;line-height:31px;font-size:18.7px;color:#2f3947;letter-spacing:0.163px;text-shadow:0 0 2px #fff,0 0 2px #fff,0 0 3px #fff,0 0 3px #fff;">DSCR = Net_Operating_Income / Debt_Payment</span>
<span class="t" style="left:1434.6px;top:235.95px;line-height:31px;font-size:18.7px;color:#2f3947;letter-spacing:-0.074px;text-shadow:0 0 2px #fff,0 0 2px #fff,0 0 3px #fff,0 0 3px #fff;"><span style="font-size:13.5px;position:relative;top:0.400px;margin-right:2.600px;">•</span> <span style="font-weight:700;color:#111827;">Returns:</span> NPV = Σ(FCF_t/(1+10 %)^t) - Initial, IRR solves</span>
<span class="t" style="left:1433.2px;top:266.95px;line-height:31px;font-size:18.7px;color:#2f3947;letter-spacing:-0.132px;text-shadow:0 0 2px #fff,0 0 2px #fff,0 0 3px #fff,0 0 3px #fff;">Σ(FCF_t/(1+IRR)^t)=0, MIRR, ROI, Payback, PI</span>
<span class="t" style="left:1433.2px;top:297.95px;line-height:31px;font-size:18.7px;color:#2f3947;letter-spacing:0.192px;text-shadow:0 0 2px #fff,0 0 2px #fff,0 0 3px #fff,0 0 3px #fff;">NPV = Σ(FCF_t/(1+Discount_Rate)^t) – Initial_Investment</span>
<span class="t" style="left:1434.6px;top:342.95px;line-height:31px;font-size:18.7px;color:#2f3947;letter-spacing:0.012px;text-shadow:0 0 2px #fff,0 0 2px #fff,0 0 3px #fff,0 0 3px #fff;"><span style="font-size:13.5px;position:relative;top:0.400px;margin-right:2.600px;">•</span> <span style="font-weight:700;color:#111827;">Key Ratios:</span> Debt/Equity, Interest Coverage = EBIT/Interest,</span>
<span class="t" style="left:1433.2px;top:373.95px;line-height:31px;font-size:18.7px;color:#2f3947;letter-spacing:0.122px;text-shadow:0 0 2px #fff,0 0 2px #fff,0 0 3px #fff,0 0 3px #fff;">Cash-Flow-to-Debt = FCF/Debt, Net Margin = NOI/Revenue×100%</span>
<span class="t" style="left:1434.6px;top:417.95px;line-height:31px;font-size:18.7px;color:#2f3947;letter-spacing:-0.034px;text-shadow:0 0 2px #fff,0 0 2px #fff,0 0 3px #fff,0 0 3px #fff;"><span style="font-size:13.5px;position:relative;top:0.400px;margin-right:2.600px;">•</span> <span style="font-weight:700;color:#111827;">Sensitivity:</span> NPV at 8 % &amp; 12 %, IRR breakeven point</span>
<span class="t" style="left:1433.2px;top:462.95px;line-height:31px;font-size:18.7px;color:#2f3947;letter-spacing:0.100px;text-shadow:0 0 2px #fff,0 0 2px #fff,0 0 3px #fff,0 0 3px #fff;"><span style="font-style:italic;">Insight:</span> Positive NPV and DSCR &gt; 1.2 indicate the project meets</span>
<span class="t" style="left:1433.2px;top:493.95px;line-height:31px;font-size:18.7px;color:#2f3947;letter-spacing:0.166px;text-shadow:0 0 2px #fff,0 0 2px #fff,0 0 3px #fff,0 0 3px #fff;">the 10 % hurdle and is financially sound.</span>
<svg class="i" style="left:1434.0px;top:542.0px" width="24" height="24" viewBox="0 0 24 24"><path d="M14.5 3.1999999999999993Q15.80 10.58 21.7 12.2Q15.80 13.82 14.5 21.2Q13.20 13.82 7.3 12.2Q13.20 10.58 14.5 3.1999999999999993Z" fill="#fbd14b"/><path d="M4.2 3.4Q4.67 6.35 6.800000000000001 7Q4.67 7.65 4.2 10.6Q3.73 7.65 1.6 7Q3.73 6.35 4.2 3.4Z" fill="#f9b63a"/><path d="M7.6 15.8Q8.10 18.92 10.399999999999999 19.6Q8.10 20.28 7.6 23.400000000000002Q7.10 20.28 4.8 19.6Q7.10 18.92 7.6 15.8Z" fill="#f9b63a"/></svg>
<span class="t" style="left:1465.5px;top:539.55px;line-height:31px;font-size:18.7px;color:#2f3947;letter-spacing:0.164px;text-shadow:0 0 2px #fff,0 0 2px #fff,0 0 3px #fff,0 0 3px #fff;">I prepared a professional styling plan (11 ops).</span>
<svg class="i" style="left:1434.0px;top:587.0px" width="24" height="24" viewBox="0 0 24 24"><defs><linearGradient id="cg" x1="0" y1="0" x2="0" y2="1"><stop offset="0" stop-color="#dfe3e8"/><stop offset=".5" stop-color="#f6f7f9"/><stop offset="1" stop-color="#ffffff"/></linearGradient></defs><rect x="1.900" y="1" width="20" height="23" fill="url(#cg)"/><rect x="2.900" y="9.400" width="5" height="14.600" fill="#1fae2e"/><rect x="9.400" y="13.200" width="4.900" height="10.800" fill="#b53b1d"/><rect x="16" y="4.200" width="5" height="19.800" fill="#1c57c4"/></svg>
<span class="t" style="left:1465.5px;top:584.55px;line-height:31px;font-size:18.7px;color:#2f3947;letter-spacing:0.362px;text-shadow:0 0 2px #fff,0 0 2px #fff,0 0 3px #fff,0 0 3px #fff;">I prepared number formatting suggestions (3 ops).</span>
<svg class="i" style="left:1434.0px;top:632.0px" width="24" height="24" viewBox="0 0 24 24"><rect x=".2" y=".6" width="23.600" height="23.200" rx="1" fill="#a93a1c"/><rect x="2.600" y="3" width="18.800" height="18.400" fill="#b9502f"/><g stroke="#f0d9cf" stroke-width=".7"><path d="M2.600 5.400h18.800M2.600 9.600h18.800M2.600 13.800h18.800M2.600 18.200h18.800"/></g><rect x="3.6" y="3.9" width="2" height="3" rx=".8" fill="#fbeee8"/><rect x="6.4" y="3.9" width="2" height="3" rx=".8" fill="#fbeee8"/><rect x="9.2" y="3.9" width="2" height="3" rx=".8" fill="#fbeee8"/><rect x="12.0" y="3.9" width="2" height="3" rx=".8" fill="#fbeee8"/><rect x="14.8" y="3.9" width="2" height="3" rx=".8" fill="#fbeee8"/><rect x="17.6" y="3.9" width="2" height="3" rx=".8" fill="#fbeee8"/><rect x="12.0" y="8.1" width="2" height="3" rx=".8" fill="#fbeee8"/><rect x="14.8" y="8.1" width="2" height="3" rx=".8" fill="#fbeee8"/><rect x="17.6" y="8.1" width="2" height="3" rx=".8" fill="#fbeee8"/><rect x="3.6" y="12.3" width="2" height="3" rx=".8" fill="#fbeee8"/><rect x="6.4" y="12.3" width="2" height="3" rx=".8" fill="#fbeee8"/><rect x="9.2" y="12.3" width="2" height="3" rx=".8" fill="#fbeee8"/><rect x="6.4" y="16.7" width="2" height="3" rx=".8" fill="#fbeee8"/><rect x="9.2" y="16.7" width="2" height="3" rx=".8" fill="#fbeee8"/><rect x="12.0" y="16.7" width="2" height="3" rx=".8" fill="#fbeee8"/></svg>
<span class="t" style="left:1465.5px;top:629.55px;line-height:31px;font-size:18.7px;color:#2f3947;letter-spacing:0.300px;text-shadow:0 0 2px #fff,0 0 2px #fff,0 0 3px #fff,0 0 3px #fff;">I also prepared formula suggestions (258 ops).</span>
<div class="b" style="left:1433.0px;top:674.6px;width:560.0px;height:1.0px;background:#e9ecf1;"></div>
<svg class="i" style="left:1434.0px;top:679.0px" width="24" height="24" viewBox="0 0 24 24"><rect x="0.200" y="0.300" width="23.600" height="23.600" rx="4" fill="#14b62f"/><path d="M5.200 12.800l4.600 5L18.900 5.600" fill="none" stroke="#fff" stroke-width="2.600" stroke-linecap="round" stroke-linejoin="round"/></svg>
<span class="t" style="left:1465.5px;top:676.05px;line-height:31px;font-size:18.7px;color:#2f3947;letter-spacing:-0.041px;text-shadow:0 0 2px #fff,0 0 2px #fff,0 0 3px #fff,0 0 3px #fff;"><span style="font-weight:700;color:#111827;">Data Saved Successfully!</span></span>
<svg class="i" style="left:1434.0px;top:723.0px" width="24" height="24" viewBox="0 0 24 24"><path d="M14.5 3.1999999999999993Q15.80 10.58 21.7 12.2Q15.80 13.82 14.5 21.2Q13.20 13.82 7.3 12.2Q13.20 10.58 14.5 3.1999999999999993Z" fill="#fbd14b"/><path d="M4.2 3.4Q4.67 6.35 6.800000000000001 7Q4.67 7.65 4.2 10.6Q3.73 7.65 1.6 7Q3.73 6.35 4.2 3.4Z" fill="#f9b63a"/><path d="M7.6 15.8Q8.10 18.92 10.399999999999999 19.6Q8.10 20.28 7.6 23.400000000000002Q7.10 20.28 4.8 19.6Q7.10 18.92 7.6 15.8Z" fill="#f9b63a"/></svg>
<span class="t" style="left:1465.5px;top:721.05px;line-height:31px;font-size:18.7px;color:#2f3947;letter-spacing:0.213px;text-shadow:0 0 2px #fff,0 0 2px #fff,0 0 3px #fff,0 0 3px #fff;">Applied 11 styling operations</span>
<svg class="i" style="left:1716.6px;top:723.0px" width="24" height="24" viewBox="0 0 24 24"><defs><linearGradient id="cg" x1="0" y1="0" x2="0" y2="1"><stop offset="0" stop-color="#dfe3e8"/><stop offset=".5" stop-color="#f6f7f9"/><stop offset="1" stop-color="#ffffff"/></linearGradient></defs><rect x="1.900" y="1" width="20" height="23" fill="url(#cg)"/><rect x="2.900" y="9.400" width="5" height="14.600" fill="#1fae2e"/><rect x="9.400" y="13.200" width="4.900" height="10.800" fill="#b53b1d"/><rect x="16" y="4.200" width="5" height="19.800" fill="#1c57c4"/></svg>
<span class="t" style="left:1747.4px;top:721.05px;line-height:31px;font-size:18.7px;color:#2f3947;letter-spacing:0.449px;text-shadow:0 0 2px #fff,0 0 2px #fff,0 0 3px #fff,0 0 3px #fff;">Applied 3 formatting</span>
<span class="t" style="left:1433.2px;top:752.05px;line-height:31px;font-size:18.7px;color:#2f3947;letter-spacing:0.287px;text-shadow:0 0 2px #fff,0 0 2px #fff,0 0 3px #fff,0 0 3px #fff;">operations</span>
<svg class="i" style="left:1530.6px;top:754.0px" width="24" height="24" viewBox="0 0 24 24"><rect x=".2" y=".6" width="23.600" height="23.200" rx="1" fill="#a93a1c"/><rect x="2.600" y="3" width="18.800" height="18.400" fill="#b9502f"/><g stroke="#f0d9cf" stroke-width=".7"><path d="M2.600 5.400h18.800M2.600 9.600h18.800M2.600 13.800h18.800M2.600 18.200h18.800"/></g><rect x="3.6" y="3.9" width="2" height="3" rx=".8" fill="#fbeee8"/><rect x="6.4" y="3.9" width="2" height="3" rx=".8" fill="#fbeee8"/><rect x="9.2" y="3.9" width="2" height="3" rx=".8" fill="#fbeee8"/><rect x="12.0" y="3.9" width="2" height="3" rx=".8" fill="#fbeee8"/><rect x="14.8" y="3.9" width="2" height="3" rx=".8" fill="#fbeee8"/><rect x="17.6" y="3.9" width="2" height="3" rx=".8" fill="#fbeee8"/><rect x="12.0" y="8.1" width="2" height="3" rx=".8" fill="#fbeee8"/><rect x="14.8" y="8.1" width="2" height="3" rx=".8" fill="#fbeee8"/><rect x="17.6" y="8.1" width="2" height="3" rx=".8" fill="#fbeee8"/><rect x="3.6" y="12.3" width="2" height="3" rx=".8" fill="#fbeee8"/><rect x="6.4" y="12.3" width="2" height="3" rx=".8" fill="#fbeee8"/><rect x="9.2" y="12.3" width="2" height="3" rx=".8" fill="#fbeee8"/><rect x="6.4" y="16.7" width="2" height="3" rx=".8" fill="#fbeee8"/><rect x="9.2" y="16.7" width="2" height="3" rx=".8" fill="#fbeee8"/><rect x="12.0" y="16.7" width="2" height="3" rx=".8" fill="#fbeee8"/></svg>
<span class="t" style="left:1562.0px;top:752.05px;line-height:31px;font-size:18.7px;color:#2f3947;letter-spacing:0.297px;text-shadow:0 0 2px #fff,0 0 2px #fff,0 0 3px #fff,0 0 3px #fff;">Generated 258 formulas</span>
<svg class="i" style="left:1434.0px;top:800.0px" width="24" height="24" viewBox="0 0 24 24"><rect x="0.200" y="0.300" width="23.600" height="23.600" rx="4" fill="#14b62f"/><path d="M5.200 12.800l4.600 5L18.900 5.600" fill="none" stroke="#fff" stroke-width="2.600" stroke-linecap="round" stroke-linejoin="round"/></svg>
<span class="t" style="left:1465.5px;top:797.05px;line-height:31px;font-size:18.7px;color:#2f3947;letter-spacing:0.093px;text-shadow:0 0 2px #fff,0 0 2px #fff,0 0 3px #fff,0 0 3px #fff;"><span style="font-weight:700;color:#111827;">Data applied to current sheet</span></span>
<div class="b" style="left:2043.5px;top:808.5px;width:4.5px;height:147.0px;background:#e1e4e9;border-left:1px solid #eceef2;"></div>
<div class="b" style="left:1427.8px;top:975.6px;width:544.2px;height:49.0px;background:#fff;border:1.500px solid #cdd2da;border-radius:9px;box-shadow:0 1px 2px rgba(0,0,0,.05);"></div>
<span class="t" style="left:1444.3px;top:988.1px;line-height:25px;font-size:18px;color:#6b7280;letter-spacing:0.548px;">Ask me anything about your data...</span>
<div class="b" style="left:1982.2px;top:976.0px;width:46.2px;height:46.4px;background:#fff;border:1px solid #eef0f3;border-radius:10px;"></div>
<svg class="i" style="left:1995.2px;top:988.6px;color:#8f96a2;" width="20.5" height="20.5" viewBox="0 0 24 24" fill="none" stroke="currentColor" stroke-width="1.8" stroke-linecap="round" stroke-linejoin="round"><path d="M14.536 21.686a.5.5 0 0 0 .937-.024l6.5-19a.496.496 0 0 0-.635-.635l-19 6.5a.5.5 0 0 0-.024.937l7.93 3.18a2 2 0 0 1 1.112 1.11z"/><path d="m21.854 2.147-10.94 10.939"/></svg>
<span class="t" style="left:1428.5px;top:1050.6px;line-height:20px;font-size:14px;color:#6b7280;letter-spacing:0.668px;-webkit-text-stroke:.25px;">Quick Actions</span>
<div class="b" style="left:1427.9px;top:1085.0px;width:107.2px;height:35.2px;background:#fff;border:1px solid #e1e4ea;border-radius:10px;"></div>
<svg class="i" style="left:1441.5px;top:1094.2px;color:#a855f7;" width="16.5" height="16.5" viewBox="0 0 24 24" fill="none" stroke="currentColor" stroke-width="2" stroke-linecap="round" stroke-linejoin="round"><path d="M4 14a1 1 0 0 1-.78-1.63l9.9-10.2a.5.5 0 0 1 .86.46l-1.92 6.02A1 1 0 0 0 13 10h7a1 1 0 0 1 .78 1.63l-9.9 10.2a.5.5 0 0 1-.86-.46l1.92-6.02A1 1 0 0 0 11 14z"/></svg>
<span class="t" style="left:1467.4px;top:1092.0px;line-height:20px;font-size:14.3px;color:#374151;letter-spacing:0.306px;-webkit-text-stroke:.25px;">Process</span>
<div class="b" style="left:1544.0px;top:1085.0px;width:94.6px;height:35.2px;background:#fff;border:1px solid #e1e4ea;border-radius:10px;"></div>
<svg class="i" style="left:1557.2px;top:1094.2px;color:#a855f7;" width="16.5" height="16.5" viewBox="0 0 24 24" fill="none" stroke="currentColor" stroke-width="2" stroke-linecap="round" stroke-linejoin="round"><path d="M3 3v16a2 2 0 0 0 2 2h16"/><path d="M18 17V9"/><path d="M13 17V5"/><path d="M8 17v-3"/></svg>
<span class="t" style="left:1583.5px;top:1092.0px;line-height:20px;font-size:14.3px;color:#374151;letter-spacing:0.351px;-webkit-text-stroke:.25px;">Graph</span>
<div class="b" style="left:1647.8px;top:1085.0px;width:106.3px;height:35.2px;background:#fff;border:1px solid #e1e4ea;border-radius:10px;"></div>
<svg class="i" style="left:1660.2px;top:1094.2px;color:#a855f7;" width="16.5" height="16.5" viewBox="0 0 24 24" fill="none" stroke="currentColor" stroke-width="2" stroke-linecap="round" stroke-linejoin="round"><path d="M12 8V4H8"/><rect width="16" height="12" x="4" y="8" rx="2"/><path d="M2 14h2"/><path d="M20 14h2"/><path d="M15 13v2"/><path d="M9 13v2"/></svg>
<span class="t" style="left:1687.0px;top:1092.0px;line-height:20px;font-size:14.3px;color:#374151;letter-spacing:0.418px;-webkit-text-stroke:.25px;">Analyze</span>
<div class="b" style="left:1763.3px;top:1085.0px;width:115.8px;height:35.2px;background:#fff;border:1px solid #e1e4ea;border-radius:10px;"></div>
<svg class="i" style="left:1776.8px;top:1094.2px;color:#a855f7;" width="16.5" height="16.5" viewBox="0 0 24 24" fill="none" stroke="currentColor" stroke-width="2" stroke-linecap="round" stroke-linejoin="round"><rect width="16" height="20" x="4" y="2" rx="2"/><line x1="8" x2="16" y1="6" y2="6"/><line x1="16" x2="16" y1="14" y2="18"/><path d="M16 10h.01"/><path d="M12 10h.01"/><path d="M8 10h.01"/><path d="M12 14h.01"/><path d="M8 14h.01"/><path d="M12 18h.01"/><path d="M8 18h.01"/></svg>
<span class="t" style="left:1802.8px;top:1092.0px;line-height:20px;font-size:14.3px;color:#374151;letter-spacing:0.388px;-webkit-text-stroke:.25px;">Formulas</span>
<div class="b" style="left:1888.3px;top:1085.0px;width:100.9px;height:35.2px;background:#fff;border:1px solid #e1e4ea;border-radius:10px;"></div>
<svg class="i" style="left:1901.5px;top:1094.2px;color:#a855f7;" width="16.5" height="16.5" viewBox="0 0 24 24" fill="none" stroke="currentColor" stroke-width="2" stroke-linecap="round" stroke-linejoin="round"><path d="m21.64 3.64-1.28-1.28a1.21 1.21 0 0 0-1.72 0L2.36 18.64a1.21 1.21 0 0 0 0 1.72l1.28 1.28a1.2 1.2 0 0 0 1.72 0L21.64 5.36a1.2 1.2 0 0 0 0-1.72"/><path d="m14 7 3 3"/><path d="M5 6v4"/><path d="M19 14v4"/><path d="M10 2v2"/><path d="M7 8H3"/><path d="M21 16h-4"/><path d="M11 3H9"/></svg>
<span class="t" style="left:1927.5px;top:1092.0px;line-height:20px;font-size:14.3px;color:#374151;letter-spacing:0.468px;-webkit-text-stroke:.25px;">Format</span>
<div class="b" style="left:1427.9px;top:1129.6px;width:87.2px;height:35.2px;background:#fff;border:1px solid #e1e4ea;border-radius:10px;"></div>
<svg class="i" style="left:1441.2px;top:1139.0px;color:#a855f7;" width="16.5" height="16.5" viewBox="0 0 24 24" fill="none" stroke="currentColor" stroke-width="2" stroke-linecap="round" stroke-linejoin="round"><path d="M15 14c.2-1 .7-1.7 1.5-2.5 1-.9 1.5-2.2 1.5-3.5A6 6 0 0 0 6 8c0 1 .2 2.2 1.5 3.5.7.7 1.3 1.5 1.5 2.5"/><path d="M9 18h6"/><path d="M10 22h4"/></svg>
<span class="t" style="left:1467.4px;top:1136.8px;line-height:20px;font-size:14.3px;color:#374151;letter-spacing:0.482px;-webkit-text-stroke:.25px;">Style</span>
<div class="b" style="left:1524.4px;top:1129.6px;width:89.2px;height:35.2px;background:#fff;border:1px solid #e1e4ea;border-radius:10px;"></div>
<svg class="i" style="left:1537.3px;top:1139.0px;color:#a855f7;" width="16.5" height="16.5" viewBox="0 0 24 24" fill="none" stroke="currentColor" stroke-width="2" stroke-linecap="round" stroke-linejoin="round"><rect width="16" height="20" x="4" y="2" rx="2"/><line x1="8" x2="16" y1="6" y2="6"/><line x1="16" x2="16" y1="14" y2="18"/><path d="M16 10h.01"/><path d="M12 10h.01"/><path d="M8 10h.01"/><path d="M12 14h.01"/><path d="M8 14h.01"/><path d="M12 18h.01"/><path d="M8 18h.01"/></svg>
<span class="t" style="left:1563.6px;top:1136.8px;line-height:20px;font-size:14.3px;color:#374151;letter-spacing:-0.238px;-webkit-text-stroke:.25px;">FP&amp;A</span>
<div class="b" style="left:1622.8px;top:1129.6px;width:158.5px;height:35.2px;background:#fff;border:1px solid #e1e4ea;border-radius:10px;"></div>
<svg class="i" style="left:1636.2px;top:1139.0px;color:#a855f7;" width="16.5" height="16.5" viewBox="0 0 24 24" fill="none" stroke="currentColor" stroke-width="2" stroke-linecap="round" stroke-linejoin="round"><path d="M3 3v16a2 2 0 0 0 2 2h16"/><path d="M18 17V9"/><path d="M13 17V5"/><path d="M8 17v-3"/></svg>
<span class="t" style="left:1662.3px;top:1136.8px;line-height:20px;font-size:14.3px;color:#374151;letter-spacing:0.423px;-webkit-text-stroke:.25px;">Project Finance</span>
<div class="b" style="left:1790.4px;top:1129.6px;width:209.9px;height:35.2px;background:#fff;border:1px solid #e1e4ea;border-radius:10px;"></div>
<svg class="i" style="left:1804.0px;top:1139.0px;color:#a855f7;" width="16.5" height="16.5" viewBox="0 0 24 24" fill="none" stroke="currentColor" stroke-width="2" stroke-linecap="round" stroke-linejoin="round"><path d="M15 2H6a2 2 0 0 0-2 2v16a2 2 0 0 0 2 2h12a2 2 0 0 0 2-2V7Z"/><path d="M14 2v4a2 2 0 0 0 2 2h4"/><path d="M8 13h2"/><path d="M14 13h2"/><path d="M8 17h2"/><path d="M14 17h2"/></svg>
<span class="t" style="left:1830.0px;top:1136.8px;line-height:20px;font-size:14.3px;color:#374151;letter-spacing:0.572px;-webkit-text-stroke:.25px;">Managerial Accounting</span>
</div></body></html>
